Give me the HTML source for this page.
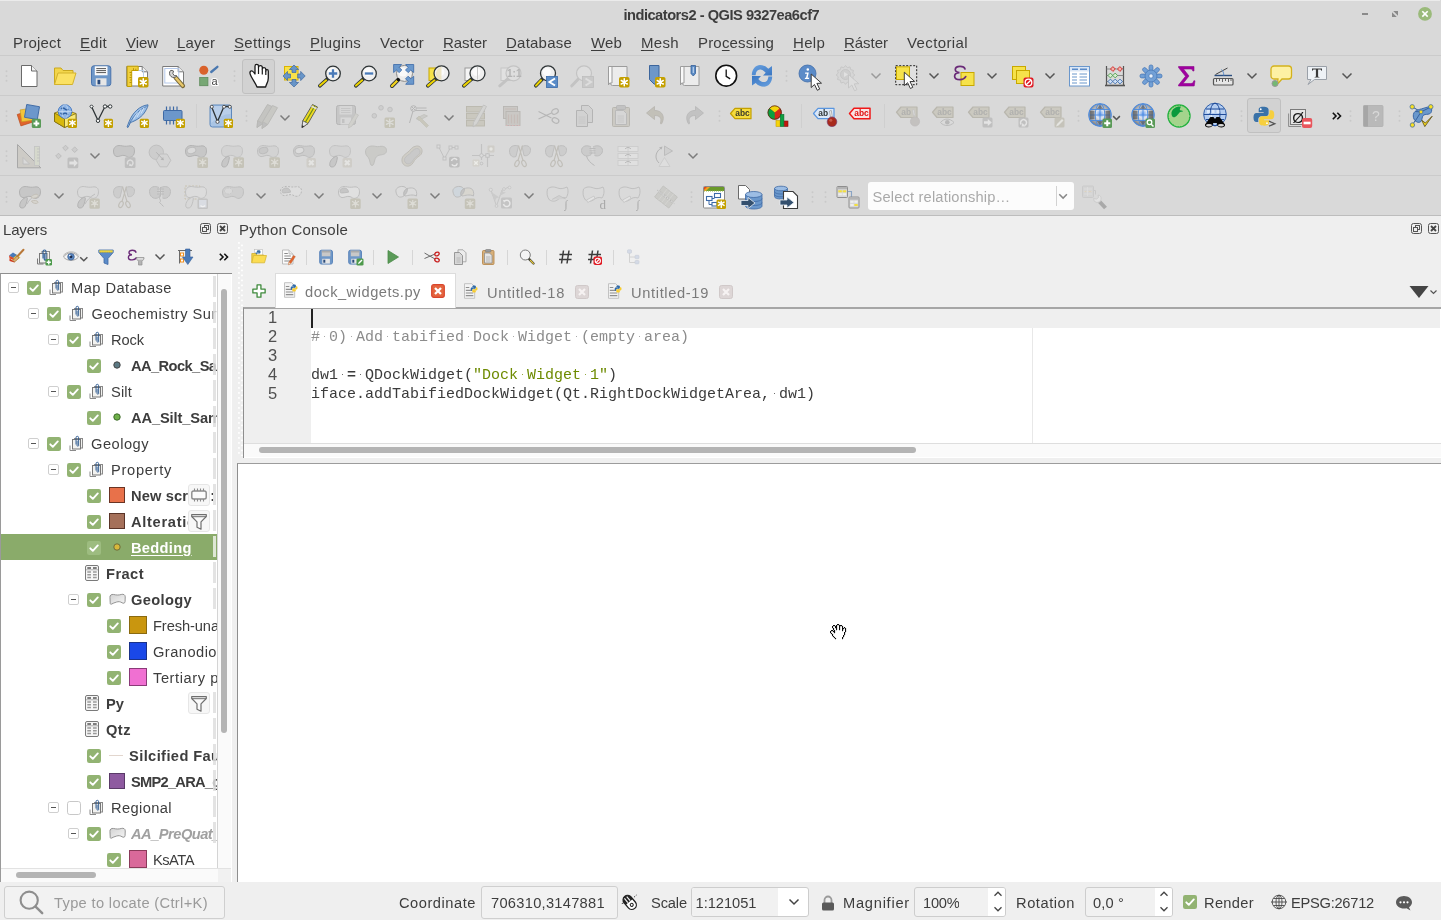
<!DOCTYPE html>
<html><head><meta charset="utf-8"><title>indicators2 - QGIS</title>
<style>
html,body{margin:0;padding:0;}
body{width:1441px;height:920px;overflow:hidden;background:#efefef;font-family:"Liberation Sans",sans-serif;position:relative;}
.t{position:absolute;white-space:nowrap;overflow:hidden;}
#root{position:absolute;left:0;top:0;width:1441px;height:920px;will-change:transform;}
.b{position:absolute;box-sizing:border-box;}
.i{position:absolute;overflow:visible;}
.ws{display:inline-block;width:9px;height:1.400px;vertical-align:middle;position:relative;top:0px;background:radial-gradient(circle at 4.500px .700px,currentColor .700px,transparent .900px);opacity:.75}
u{text-decoration:underline;text-underline-offset:2px;text-decoration-thickness:1px;}
</style></head><body><div id="root">
<div class="b" style="left:0px;top:0px;width:1441px;height:216px;background:#d9d9d9;"></div>
<div class="b" style="left:0px;top:215px;width:1441px;height:1px;background:#bdbdbd;"></div>
<div class="b" style="left:0px;top:55px;width:1441px;height:1px;background:#cbcbcb;"></div>
<div class="b" style="left:0px;top:95px;width:1441px;height:1px;background:#cbcbcb;"></div>
<div class="b" style="left:0px;top:135px;width:1441px;height:1px;background:#cbcbcb;"></div>
<div class="b" style="left:0px;top:175px;width:1441px;height:1px;background:#cbcbcb;"></div>
<div class="t " style="left:623.4px;top:4.8px;height:20px;line-height:20px;font-size:14.67px;color:#3d3d3d;letter-spacing:-0.495px;font-weight:700;">indicators2 - QGIS 9327ea6cf7</div>
<div class="b" style="left:0px;top:0px;width:1440px;height:1px;background:#ebebeb;"></div>
<div class="b" style="left:1362px;top:12.8px;width:6.2px;height:2.1px;background:#8a8a8a;"></div>
<svg class="i" style="left:1392px;top:11px" width="6" height="6" viewBox="0 0 6 6"><path d="M1.200 0h4.800v4.800zM0 1.200l4.800 4.800h-4.800z" fill="#8a8a8a"/></svg>
<svg class="i" style="left:1418px;top:7px" width="14" height="14" viewBox="0 0 14 14"><circle cx="7" cy="6.900" r="6.900" fill="#9aba7a"/><path d="M4.300 4.200l5.400 5.400M9.700 4.200l-5.400 5.400" stroke="#fff" stroke-width="1.600"/></svg>
<div class="t " style="left:13px;top:32.5px;height:20px;line-height:20px;font-size:15px;color:#3d3d3d;letter-spacing:0.188px;">Pro<u>j</u>ect</div>
<div class="t " style="left:80px;top:32.5px;height:20px;line-height:20px;font-size:15px;color:#3d3d3d;letter-spacing:0.288px;"><u>E</u>dit</div>
<div class="t " style="left:126px;top:32.5px;height:20px;line-height:20px;font-size:15px;color:#3d3d3d;letter-spacing:-0.060px;"><u>V</u>iew</div>
<div class="t " style="left:177px;top:32.5px;height:20px;line-height:20px;font-size:15px;color:#3d3d3d;letter-spacing:0.096px;"><u>L</u>ayer</div>
<div class="t " style="left:234px;top:32.5px;height:20px;line-height:20px;font-size:15px;color:#3d3d3d;letter-spacing:0.350px;"><u>S</u>ettings</div>
<div class="t " style="left:310px;top:32.5px;height:20px;line-height:20px;font-size:15px;color:#3d3d3d;letter-spacing:0.258px;"><u>P</u>lugins</div>
<div class="t " style="left:380px;top:32.5px;height:20px;line-height:20px;font-size:15px;color:#3d3d3d;letter-spacing:0.246px;">Vect<u>o</u>r</div>
<div class="t " style="left:443px;top:32.5px;height:20px;line-height:20px;font-size:15px;color:#3d3d3d;letter-spacing:-0.030px;"><u>R</u>aster</div>
<div class="t " style="left:506px;top:32.5px;height:20px;line-height:20px;font-size:15px;color:#3d3d3d;letter-spacing:0.224px;"><u>D</u>atabase</div>
<div class="t " style="left:591px;top:32.5px;height:20px;line-height:20px;font-size:15px;color:#3d3d3d;letter-spacing:0.143px;"><u>W</u>eb</div>
<div class="t " style="left:641px;top:32.5px;height:20px;line-height:20px;font-size:15px;color:#3d3d3d;letter-spacing:0.330px;"><u>M</u>esh</div>
<div class="t " style="left:698px;top:32.5px;height:20px;line-height:20px;font-size:15px;color:#3d3d3d;letter-spacing:0.180px;">Pro<u>c</u>essing</div>
<div class="t " style="left:793px;top:32.5px;height:20px;line-height:20px;font-size:15px;color:#3d3d3d;letter-spacing:0.288px;"><u>H</u>elp</div>
<div class="t " style="left:844px;top:32.5px;height:20px;line-height:20px;font-size:15px;color:#3d3d3d;letter-spacing:-0.030px;"><u>R</u>áster</div>
<div class="t " style="left:907px;top:32.5px;height:20px;line-height:20px;font-size:15px;color:#3d3d3d;letter-spacing:0.385px;">Vect<u>o</u>rial</div>
<div class="t " style="left:3px;top:219.5px;height:20px;line-height:20px;font-size:15px;color:#3d3d3d;letter-spacing:-0.170px;">Layers</div>
<div class="t " style="left:239px;top:219.5px;height:20px;line-height:20px;font-size:15px;color:#3d3d3d;letter-spacing:0.222px;">Python Console</div>
<div class="b" style="left:0px;top:273px;width:232px;height:610px;background:#fff;border-top:1px solid #8f8f8f;border-left:1px solid #9a9a9a;"></div>
<div class="b" style="left:217px;top:274px;width:1px;height:595px;background:#d4d4d4;"></div>
<div class="b" style="left:218px;top:274px;width:13px;height:595px;background:#fafafa;"></div>
<div class="b" style="left:221px;top:289px;width:6px;height:444px;background:#b4b4b4;border-radius:3px;"></div>
<div class="b" style="left:1px;top:868px;width:230px;height:14px;background:#fafafa;border-top:1px solid #e2e2e2;"></div>
<div class="b" style="left:16px;top:872px;width:80px;height:6px;background:#b4b4b4;border-radius:3px;"></div>
<div class="b" style="left:218px;top:869px;width:13px;height:13px;background:#f1f1f1;"></div>
<div class="b" style="left:1px;top:274px;width:216px;height:594px;overflow:hidden">
<div class="b" style="left:0px;top:260px;width:216px;height:26px;background:#8aab6a"></div>
<svg class="i" style="left:7px;top:8px" width="11" height="11" viewBox="0 0 11 11"><rect x="0.5" y="0.5" width="10" height="10" rx="1.500" fill="#fff" stroke="#cfcfcf"/><path d="M3 5.500h5" stroke="#555" stroke-width="1"/></svg>
<svg class="i" style="left:26px;top:7px" width="14" height="14" viewBox="0 0 14 14"><rect x="0" y="0" width="14" height="14" rx="2.200" fill="#92b372"/><path d="M3.300 7.300l2.500 2.500 5-5.400" stroke="#fff" stroke-width="1.900" fill="none" stroke-linecap="round" stroke-linejoin="round"/></svg>
<svg class="i" style="left:47.7px;top:4px" width="16" height="18" viewBox="0 0 16 18"><path d="M1 11.500v5h6" stroke="#8a8a8a" fill="none" stroke-width="1"/><rect x="5.500" y="4.500" width="8" height="9.500" fill="#f2f2f0" stroke="#8a8a8a" stroke-width="1"/><rect x="3.500" y="5.500" width="8" height="9.500" fill="#f2f2f0" stroke="#777" stroke-width="1"/><path d="M7 10.500v-6.800a1.300 1.400 0 0 1 2.600 0v8a.8 .8 0 0 1-1.500 0v-5" stroke="#2a5890" fill="none" stroke-width=".9"/></svg>
<div class="t " style="left:70px;top:4px;height:20px;line-height:20px;font-size:14.67px;color:#3d3d3d;letter-spacing:0.466px;width:146px;">Map Database</div>
<svg class="i" style="left:27px;top:34px" width="11" height="11" viewBox="0 0 11 11"><rect x="0.5" y="0.5" width="10" height="10" rx="1.500" fill="#fff" stroke="#cfcfcf"/><path d="M3 5.500h5" stroke="#555" stroke-width="1"/></svg>
<svg class="i" style="left:46px;top:33px" width="14" height="14" viewBox="0 0 14 14"><rect x="0" y="0" width="14" height="14" rx="2.200" fill="#92b372"/><path d="M3.300 7.300l2.500 2.500 5-5.400" stroke="#fff" stroke-width="1.900" fill="none" stroke-linecap="round" stroke-linejoin="round"/></svg>
<svg class="i" style="left:67.7px;top:30px" width="16" height="18" viewBox="0 0 16 18"><path d="M1 11.500v5h6" stroke="#8a8a8a" fill="none" stroke-width="1"/><rect x="5.500" y="4.500" width="8" height="9.500" fill="#f2f2f0" stroke="#8a8a8a" stroke-width="1"/><rect x="3.500" y="5.500" width="8" height="9.500" fill="#f2f2f0" stroke="#777" stroke-width="1"/><path d="M7 10.500v-6.800a1.300 1.400 0 0 1 2.600 0v8a.8 .8 0 0 1-1.500 0v-5" stroke="#2a5890" fill="none" stroke-width=".9"/></svg>
<div class="t " style="left:90.5px;top:30px;height:20px;line-height:20px;font-size:14.67px;color:#3d3d3d;letter-spacing:0.506px;width:125.5px;">Geochemistry Surveys</div>
<svg class="i" style="left:47px;top:60px" width="11" height="11" viewBox="0 0 11 11"><rect x="0.5" y="0.5" width="10" height="10" rx="1.500" fill="#fff" stroke="#cfcfcf"/><path d="M3 5.500h5" stroke="#555" stroke-width="1"/></svg>
<svg class="i" style="left:66px;top:59px" width="14" height="14" viewBox="0 0 14 14"><rect x="0" y="0" width="14" height="14" rx="2.200" fill="#92b372"/><path d="M3.300 7.300l2.500 2.500 5-5.400" stroke="#fff" stroke-width="1.900" fill="none" stroke-linecap="round" stroke-linejoin="round"/></svg>
<svg class="i" style="left:87.7px;top:56px" width="16" height="18" viewBox="0 0 16 18"><path d="M1 11.500v5h6" stroke="#8a8a8a" fill="none" stroke-width="1"/><rect x="5.500" y="4.500" width="8" height="9.500" fill="#f2f2f0" stroke="#8a8a8a" stroke-width="1"/><rect x="3.500" y="5.500" width="8" height="9.500" fill="#f2f2f0" stroke="#777" stroke-width="1"/><path d="M7 10.500v-6.800a1.300 1.400 0 0 1 2.600 0v8a.8 .8 0 0 1-1.500 0v-5" stroke="#2a5890" fill="none" stroke-width=".9"/></svg>
<div class="t " style="left:110px;top:56px;height:20px;line-height:20px;font-size:14.67px;color:#3d3d3d;letter-spacing:-0.106px;width:106px;">Rock</div>
<svg class="i" style="left:86px;top:85px" width="14" height="14" viewBox="0 0 14 14"><rect x="0" y="0" width="14" height="14" rx="2.200" fill="#92b372"/><path d="M3.300 7.300l2.500 2.500 5-5.400" stroke="#fff" stroke-width="1.900" fill="none" stroke-linecap="round" stroke-linejoin="round"/></svg>
<svg class="i" style="left:111px;top:86px" width="10" height="10" viewBox="0 0 10 10"><circle cx="5" cy="5" r="3.2" fill="#5c7a84" stroke="#444" stroke-width="1"/></svg>
<div class="t " style="left:130px;top:82px;height:20px;line-height:20px;font-size:14.67px;color:#3d3d3d;letter-spacing:-0.582px;font-weight:700;width:86px;">AA_Rock_Samples</div>
<svg class="i" style="left:47px;top:112px" width="11" height="11" viewBox="0 0 11 11"><rect x="0.5" y="0.5" width="10" height="10" rx="1.500" fill="#fff" stroke="#cfcfcf"/><path d="M3 5.500h5" stroke="#555" stroke-width="1"/></svg>
<svg class="i" style="left:66px;top:111px" width="14" height="14" viewBox="0 0 14 14"><rect x="0" y="0" width="14" height="14" rx="2.200" fill="#92b372"/><path d="M3.300 7.300l2.500 2.500 5-5.400" stroke="#fff" stroke-width="1.900" fill="none" stroke-linecap="round" stroke-linejoin="round"/></svg>
<svg class="i" style="left:87.7px;top:108px" width="16" height="18" viewBox="0 0 16 18"><path d="M1 11.500v5h6" stroke="#8a8a8a" fill="none" stroke-width="1"/><rect x="5.500" y="4.500" width="8" height="9.500" fill="#f2f2f0" stroke="#8a8a8a" stroke-width="1"/><rect x="3.500" y="5.500" width="8" height="9.500" fill="#f2f2f0" stroke="#777" stroke-width="1"/><path d="M7 10.500v-6.800a1.300 1.400 0 0 1 2.600 0v8a.8 .8 0 0 1-1.500 0v-5" stroke="#2a5890" fill="none" stroke-width=".9"/></svg>
<div class="t " style="left:110px;top:108px;height:20px;line-height:20px;font-size:14.67px;color:#3d3d3d;letter-spacing:0.155px;width:106px;">Silt</div>
<svg class="i" style="left:86px;top:137px" width="14" height="14" viewBox="0 0 14 14"><rect x="0" y="0" width="14" height="14" rx="2.200" fill="#92b372"/><path d="M3.300 7.300l2.500 2.500 5-5.400" stroke="#fff" stroke-width="1.900" fill="none" stroke-linecap="round" stroke-linejoin="round"/></svg>
<svg class="i" style="left:111px;top:138px" width="10" height="10" viewBox="0 0 10 10"><circle cx="5" cy="5" r="3.2" fill="#6fb04a" stroke="#3d6a2a" stroke-width="1"/></svg>
<div class="t " style="left:130px;top:134px;height:20px;line-height:20px;font-size:14.67px;color:#3d3d3d;letter-spacing:-0.119px;font-weight:700;width:86px;">AA_Silt_Samples</div>
<svg class="i" style="left:27px;top:164px" width="11" height="11" viewBox="0 0 11 11"><rect x="0.5" y="0.5" width="10" height="10" rx="1.500" fill="#fff" stroke="#cfcfcf"/><path d="M3 5.500h5" stroke="#555" stroke-width="1"/></svg>
<svg class="i" style="left:46px;top:163px" width="14" height="14" viewBox="0 0 14 14"><rect x="0" y="0" width="14" height="14" rx="2.200" fill="#92b372"/><path d="M3.300 7.300l2.500 2.500 5-5.400" stroke="#fff" stroke-width="1.900" fill="none" stroke-linecap="round" stroke-linejoin="round"/></svg>
<svg class="i" style="left:67.7px;top:160px" width="16" height="18" viewBox="0 0 16 18"><path d="M1 11.500v5h6" stroke="#8a8a8a" fill="none" stroke-width="1"/><rect x="5.500" y="4.500" width="8" height="9.500" fill="#f2f2f0" stroke="#8a8a8a" stroke-width="1"/><rect x="3.500" y="5.500" width="8" height="9.500" fill="#f2f2f0" stroke="#777" stroke-width="1"/><path d="M7 10.500v-6.800a1.300 1.400 0 0 1 2.600 0v8a.8 .8 0 0 1-1.500 0v-5" stroke="#2a5890" fill="none" stroke-width=".9"/></svg>
<div class="t " style="left:90px;top:160px;height:20px;line-height:20px;font-size:14.67px;color:#3d3d3d;letter-spacing:0.480px;width:126px;">Geology</div>
<svg class="i" style="left:47px;top:190px" width="11" height="11" viewBox="0 0 11 11"><rect x="0.5" y="0.5" width="10" height="10" rx="1.500" fill="#fff" stroke="#cfcfcf"/><path d="M3 5.500h5" stroke="#555" stroke-width="1"/></svg>
<svg class="i" style="left:66px;top:189px" width="14" height="14" viewBox="0 0 14 14"><rect x="0" y="0" width="14" height="14" rx="2.200" fill="#92b372"/><path d="M3.300 7.300l2.500 2.500 5-5.400" stroke="#fff" stroke-width="1.900" fill="none" stroke-linecap="round" stroke-linejoin="round"/></svg>
<svg class="i" style="left:87.7px;top:186px" width="16" height="18" viewBox="0 0 16 18"><path d="M1 11.500v5h6" stroke="#8a8a8a" fill="none" stroke-width="1"/><rect x="5.500" y="4.500" width="8" height="9.500" fill="#f2f2f0" stroke="#8a8a8a" stroke-width="1"/><rect x="3.500" y="5.500" width="8" height="9.500" fill="#f2f2f0" stroke="#777" stroke-width="1"/><path d="M7 10.500v-6.800a1.300 1.400 0 0 1 2.600 0v8a.8 .8 0 0 1-1.500 0v-5" stroke="#2a5890" fill="none" stroke-width=".9"/></svg>
<div class="t " style="left:110px;top:186px;height:20px;line-height:20px;font-size:14.67px;color:#3d3d3d;letter-spacing:0.695px;width:106px;">Property</div>
<svg class="i" style="left:86px;top:215px" width="14" height="14" viewBox="0 0 14 14"><rect x="0" y="0" width="14" height="14" rx="2.200" fill="#92b372"/><path d="M3.300 7.300l2.500 2.500 5-5.400" stroke="#fff" stroke-width="1.900" fill="none" stroke-linecap="round" stroke-linejoin="round"/></svg>
<div class="b" style="left:108px;top:213px;width:16px;height:16px;background:#e8714a;border:1px solid #6a3424"></div>
<div class="t " style="left:130px;top:212px;height:20px;line-height:20px;font-size:14.67px;color:#3d3d3d;letter-spacing:0.105px;font-weight:700;width:56.5px;">New scratch layer</div>
<div class="t " style="left:209.3px;top:212px;height:20px;line-height:20px;font-size:14.67px;color:#3d3d3d;font-weight:700;width:2.700px;">:h</div>
<svg class="i" style="left:86px;top:241px" width="14" height="14" viewBox="0 0 14 14"><rect x="0" y="0" width="14" height="14" rx="2.200" fill="#92b372"/><path d="M3.300 7.300l2.500 2.500 5-5.400" stroke="#fff" stroke-width="1.900" fill="none" stroke-linecap="round" stroke-linejoin="round"/></svg>
<div class="b" style="left:108px;top:239px;width:16px;height:16px;background:#a5705a;border:1px solid #5a3428"></div>
<div class="t " style="left:130px;top:238px;height:20px;line-height:20px;font-size:14.67px;color:#3d3d3d;letter-spacing:0.682px;font-weight:700;width:56.5px;">Alteration</div>
<svg class="i" style="left:86px;top:267px" width="14" height="14" viewBox="0 0 14 14"><rect x="0" y="0" width="14" height="14" rx="2.200" fill="#9dbc80"/><path d="M3.300 7.300l2.500 2.500 5-5.400" stroke="#fff" stroke-width="1.900" fill="none" stroke-linecap="round" stroke-linejoin="round"/></svg>
<svg class="i" style="left:111px;top:268px" width="10" height="10" viewBox="0 0 10 10"><circle cx="5" cy="5" r="3.2" fill="#d8b83a" stroke="#6a6a3a" stroke-width="1"/></svg>
<div class="t " style="left:130px;top:264px;height:20px;line-height:20px;font-size:14.67px;color:#fff;letter-spacing:0.290px;font-weight:700;text-decoration:underline;text-underline-offset:2px;width:86px;">Bedding</div>
<svg class="i" style="left:83px;top:290.8px" width="16" height="16" viewBox="0 0 16 16"><rect x="1.500" y="0.500" width="13" height="15" rx="1.500" fill="#f6f6f6" stroke="#7a7a7a"/><path d="M3.300 3h3.700M9 3h3.700" stroke="#555" stroke-width="1.300"/><path d="M2 4.800h12" stroke="#9a9a9a" stroke-width=".8"/><path d="M3.300 7h3.700M9 7h3.700M3.300 9.700h3.700M9 9.700h3.700M3.300 12.400h3.700M9 12.400h3.700" stroke="#9a9a9a" stroke-width="1.500"/></svg>
<div class="t " style="left:105px;top:290px;height:20px;line-height:20px;font-size:14.67px;color:#3d3d3d;letter-spacing:0.426px;font-weight:700;width:111px;">Fract</div>
<svg class="i" style="left:67px;top:320px" width="11" height="11" viewBox="0 0 11 11"><rect x="0.5" y="0.5" width="10" height="10" rx="1.500" fill="#fff" stroke="#cfcfcf"/><path d="M3 5.500h5" stroke="#555" stroke-width="1"/></svg>
<svg class="i" style="left:86px;top:319px" width="14" height="14" viewBox="0 0 14 14"><rect x="0" y="0" width="14" height="14" rx="2.200" fill="#92b372"/><path d="M3.300 7.300l2.500 2.500 5-5.400" stroke="#fff" stroke-width="1.900" fill="none" stroke-linecap="round" stroke-linejoin="round"/></svg>
<svg class="i" style="left:107.5px;top:318.6px" width="17" height="12.200" viewBox="0 0 18 14" preserveAspectRatio="none"><defs><linearGradient id="pg1" x1="0" y1="0" x2="1" y2="1"><stop offset="0" stop-color="#d2d2d2"/><stop offset="1" stop-color="#f6f6f6"/></linearGradient></defs><path d="M1 5c-.3-2.300 1.500-3.800 3.800-3.300 2.800.6 5.200 1 8.200 0 2.300-.8 4.300.5 4.200 2.800l-.2 5.500c-.1 1.800-1.800 2.200-3.200 1.200-1.800-1.300-3.800-1.600-5.800-.8-2 .8-3.800 1.200-5.300 2.300-.8.600-1.300.2-1.400-.9z" fill="url(#pg1)" stroke="#8a8a8a" stroke-width="1"/></svg>
<div class="t " style="left:130px;top:316px;height:20px;line-height:20px;font-size:14.67px;color:#3d3d3d;letter-spacing:0.331px;font-weight:700;width:86px;">Geology</div>
<svg class="i" style="left:106px;top:345px" width="14" height="14" viewBox="0 0 14 14"><rect x="0" y="0" width="14" height="14" rx="2.200" fill="#92b372"/><path d="M3.300 7.300l2.500 2.500 5-5.400" stroke="#fff" stroke-width="1.900" fill="none" stroke-linecap="round" stroke-linejoin="round"/></svg>
<div class="b" style="left:128px;top:342px;width:18px;height:18px;background:#c9960f;border:1px solid #8a6a10"></div>
<div class="t " style="left:152px;top:342px;height:20px;line-height:20px;font-size:14.67px;color:#3d3d3d;letter-spacing:-0.095px;width:64px;">Fresh-unaltered</div>
<svg class="i" style="left:106px;top:371px" width="14" height="14" viewBox="0 0 14 14"><rect x="0" y="0" width="14" height="14" rx="2.200" fill="#92b372"/><path d="M3.300 7.300l2.500 2.500 5-5.400" stroke="#fff" stroke-width="1.900" fill="none" stroke-linecap="round" stroke-linejoin="round"/></svg>
<div class="b" style="left:128px;top:368px;width:18px;height:18px;background:#1a48e8;border:1px solid #1a328a"></div>
<div class="t " style="left:152px;top:368px;height:20px;line-height:20px;font-size:14.67px;color:#3d3d3d;letter-spacing:0.457px;width:64px;">Granodiorite</div>
<svg class="i" style="left:106px;top:397px" width="14" height="14" viewBox="0 0 14 14"><rect x="0" y="0" width="14" height="14" rx="2.200" fill="#92b372"/><path d="M3.300 7.300l2.500 2.500 5-5.400" stroke="#fff" stroke-width="1.900" fill="none" stroke-linecap="round" stroke-linejoin="round"/></svg>
<div class="b" style="left:128px;top:394px;width:18px;height:18px;background:#f070d2;border:1px solid #8a3a78"></div>
<div class="t " style="left:152px;top:394px;height:20px;line-height:20px;font-size:14.67px;color:#3d3d3d;letter-spacing:0.567px;width:64px;">Tertiary porphyry</div>
<svg class="i" style="left:83px;top:420.8px" width="16" height="16" viewBox="0 0 16 16"><rect x="1.500" y="0.500" width="13" height="15" rx="1.500" fill="#f6f6f6" stroke="#7a7a7a"/><path d="M3.300 3h3.700M9 3h3.700" stroke="#555" stroke-width="1.300"/><path d="M2 4.800h12" stroke="#9a9a9a" stroke-width=".8"/><path d="M3.300 7h3.700M9 7h3.700M3.300 9.700h3.700M9 9.700h3.700M3.300 12.400h3.700M9 12.400h3.700" stroke="#9a9a9a" stroke-width="1.500"/></svg>
<div class="t " style="left:105px;top:420px;height:20px;line-height:20px;font-size:14.67px;color:#3d3d3d;letter-spacing:0.028px;font-weight:700;width:81.5px;">Py</div>
<svg class="i" style="left:83px;top:446.8px" width="16" height="16" viewBox="0 0 16 16"><rect x="1.500" y="0.500" width="13" height="15" rx="1.500" fill="#f6f6f6" stroke="#7a7a7a"/><path d="M3.300 3h3.700M9 3h3.700" stroke="#555" stroke-width="1.300"/><path d="M2 4.800h12" stroke="#9a9a9a" stroke-width=".8"/><path d="M3.300 7h3.700M9 7h3.700M3.300 9.700h3.700M9 9.700h3.700M3.300 12.400h3.700M9 12.400h3.700" stroke="#9a9a9a" stroke-width="1.500"/></svg>
<div class="t " style="left:105px;top:446px;height:20px;line-height:20px;font-size:14.67px;color:#3d3d3d;letter-spacing:0.456px;font-weight:700;width:111px;">Qtz</div>
<svg class="i" style="left:86px;top:475px" width="14" height="14" viewBox="0 0 14 14"><rect x="0" y="0" width="14" height="14" rx="2.200" fill="#92b372"/><path d="M3.300 7.300l2.500 2.500 5-5.400" stroke="#fff" stroke-width="1.900" fill="none" stroke-linecap="round" stroke-linejoin="round"/></svg>
<div class="b" style="left:108px;top:480.5px;width:14px;height:1.200px;background:#e2d6ce"></div>
<div class="t " style="left:128px;top:472px;height:20px;line-height:20px;font-size:14.67px;color:#3d3d3d;letter-spacing:0.392px;font-weight:700;width:88px;">Silcified Faults</div>
<svg class="i" style="left:86px;top:501px" width="14" height="14" viewBox="0 0 14 14"><rect x="0" y="0" width="14" height="14" rx="2.200" fill="#92b372"/><path d="M3.300 7.300l2.500 2.500 5-5.400" stroke="#fff" stroke-width="1.900" fill="none" stroke-linecap="round" stroke-linejoin="round"/></svg>
<div class="b" style="left:108px;top:499px;width:16px;height:16px;background:#8e5aa0;border:1px solid #5a3a68"></div>
<div class="t " style="left:130px;top:498px;height:20px;line-height:20px;font-size:14.67px;color:#3d3d3d;letter-spacing:-0.750px;font-weight:700;width:86px;">SMP2_ARA_geol</div>
<svg class="i" style="left:47px;top:528px" width="11" height="11" viewBox="0 0 11 11"><rect x="0.5" y="0.5" width="10" height="10" rx="1.500" fill="#fff" stroke="#cfcfcf"/><path d="M3 5.500h5" stroke="#555" stroke-width="1"/></svg>
<svg class="i" style="left:66px;top:527px" width="14" height="14" viewBox="0 0 14 14"><rect x="0.5" y="0.5" width="13" height="13" rx="2.200" fill="#fff" stroke="#c8c8c8"/></svg>
<svg class="i" style="left:87.7px;top:524px" width="16" height="18" viewBox="0 0 16 18"><path d="M1 11.500v5h6" stroke="#8a8a8a" fill="none" stroke-width="1"/><rect x="5.500" y="4.500" width="8" height="9.500" fill="#f2f2f0" stroke="#8a8a8a" stroke-width="1"/><rect x="3.500" y="5.500" width="8" height="9.500" fill="#f2f2f0" stroke="#777" stroke-width="1"/><path d="M7 10.500v-6.800a1.300 1.400 0 0 1 2.600 0v8a.8 .8 0 0 1-1.500 0v-5" stroke="#2a5890" fill="none" stroke-width=".9"/></svg>
<div class="t " style="left:110px;top:524px;height:20px;line-height:20px;font-size:14.67px;color:#3d3d3d;letter-spacing:0.387px;width:106px;">Regional</div>
<svg class="i" style="left:67px;top:554px" width="11" height="11" viewBox="0 0 11 11"><rect x="0.5" y="0.5" width="10" height="10" rx="1.500" fill="#fff" stroke="#cfcfcf"/><path d="M3 5.500h5" stroke="#555" stroke-width="1"/></svg>
<svg class="i" style="left:86px;top:553px" width="14" height="14" viewBox="0 0 14 14"><rect x="0" y="0" width="14" height="14" rx="2.200" fill="#92b372"/><path d="M3.300 7.300l2.500 2.500 5-5.400" stroke="#fff" stroke-width="1.900" fill="none" stroke-linecap="round" stroke-linejoin="round"/></svg>
<svg class="i" style="left:107.5px;top:552.6px" width="17" height="12.200" viewBox="0 0 18 14" preserveAspectRatio="none"><defs><linearGradient id="pg2" x1="0" y1="0" x2="1" y2="1"><stop offset="0" stop-color="#d2d2d2"/><stop offset="1" stop-color="#f6f6f6"/></linearGradient></defs><path d="M1 5c-.3-2.300 1.500-3.800 3.800-3.300 2.800.6 5.200 1 8.200 0 2.300-.8 4.300.5 4.200 2.800l-.2 5.500c-.1 1.800-1.800 2.200-3.200 1.200-1.800-1.300-3.800-1.600-5.800-.8-2 .8-3.800 1.200-5.300 2.300-.8.600-1.300.2-1.400-.9z" fill="url(#pg2)" stroke="#8a8a8a" stroke-width="1"/></svg>
<div class="t " style="left:130px;top:550px;height:20px;line-height:20px;font-size:14.67px;color:#a0a0a0;letter-spacing:-0.511px;font-weight:700;font-style:italic;width:86px;">AA_PreQuat_geol</div>
<svg class="i" style="left:106px;top:579px" width="14" height="14" viewBox="0 0 14 14"><rect x="0" y="0" width="14" height="14" rx="2.200" fill="#92b372"/><path d="M3.300 7.300l2.500 2.500 5-5.400" stroke="#fff" stroke-width="1.900" fill="none" stroke-linecap="round" stroke-linejoin="round"/></svg>
<div class="b" style="left:128px;top:576px;width:18px;height:18px;background:#d9699a;border:1px solid #8a3a5a"></div>
<div class="t " style="left:152px;top:576px;height:20px;line-height:20px;font-size:14.67px;color:#3d3d3d;letter-spacing:-0.495px;width:64px;">KsATA</div>
<div class="b" style="left:212.2px;top:1.8px;width:2.700px;height:21.700px;background:rgba(222,222,222,.85)"></div>
<div class="b" style="left:212.2px;top:27.8px;width:2.700px;height:21.700px;background:rgba(222,222,222,.85)"></div>
<div class="b" style="left:212.2px;top:53.8px;width:2.700px;height:21.700px;background:rgba(222,222,222,.85)"></div>
<div class="b" style="left:212.2px;top:79.8px;width:2.700px;height:21.700px;background:rgba(222,222,222,.85)"></div>
<div class="b" style="left:212.2px;top:105.8px;width:2.700px;height:21.700px;background:rgba(222,222,222,.85)"></div>
<div class="b" style="left:212.2px;top:131.8px;width:2.700px;height:21.700px;background:rgba(222,222,222,.85)"></div>
<div class="b" style="left:212.2px;top:157.8px;width:2.700px;height:21.700px;background:rgba(222,222,222,.85)"></div>
<div class="b" style="left:212.2px;top:183.8px;width:2.700px;height:21.700px;background:rgba(222,222,222,.85)"></div>
<div class="b" style="left:212.2px;top:209.8px;width:2.700px;height:21.700px;background:rgba(222,222,222,.85)"></div>
<div class="b" style="left:212.2px;top:235.8px;width:2.700px;height:21.700px;background:rgba(222,222,222,.85)"></div>
<div class="b" style="left:212.2px;top:261.8px;width:2.700px;height:21.700px;background:rgba(240,244,236,.82)"></div>
<div class="b" style="left:212.2px;top:287.8px;width:2.700px;height:21.700px;background:rgba(222,222,222,.85)"></div>
<div class="b" style="left:212.2px;top:313.8px;width:2.700px;height:21.700px;background:rgba(222,222,222,.85)"></div>
<div class="b" style="left:212.2px;top:417.8px;width:2.700px;height:21.700px;background:rgba(222,222,222,.85)"></div>
<div class="b" style="left:212.2px;top:443.8px;width:2.700px;height:21.700px;background:rgba(222,222,222,.85)"></div>
<div class="b" style="left:212.2px;top:469.8px;width:2.700px;height:21.700px;background:rgba(222,222,222,.85)"></div>
<div class="b" style="left:212.2px;top:495.8px;width:2.700px;height:21.700px;background:rgba(222,222,222,.85)"></div>
<div class="b" style="left:212.2px;top:521.8px;width:2.700px;height:21.700px;background:rgba(222,222,222,.85)"></div>
<div class="b" style="left:212.2px;top:547.8px;width:2.700px;height:21.700px;background:rgba(222,222,222,.85)"></div>
<div class="b" style="left:187.3px;top:210.4px;width:22px;height:22px;background:#f7f7f7;border:1px solid #e6e6e6;border-radius:3px"></div>
<svg class="i" style="left:189.3px;top:214.4px" width="18" height="14" viewBox="0 0 18 14"><rect x="1.800" y="3" width="14.400" height="8" rx="1.800" fill="#fbfbfb" stroke="#8a8a8a" stroke-width="1.400"/><path d="M4.500 0.500v2.500M7.500 0.500v2.500M10.500 0.500v2.500M13.500 0.500v2.500M4.500 11v2.500M7.500 11v2.500M10.500 11v2.500M13.500 11v2.500" stroke="#8a8a8a" stroke-width="1.100"/></svg>
<div class="b" style="left:187.3px;top:236.4px;width:22px;height:22px;background:#f7f7f7;border:1px solid #e6e6e6;border-radius:3px"></div>
<svg class="i" style="left:190.3px;top:239.9px" width="16" height="16" viewBox="0 0 16 16"><path d="M0.700 0.700h14.600v1.800l-5.300 5.300v7.400l-4-2v-5.400l-5.300-5.300z" fill="#fafafa" stroke="#6e6e6e" stroke-width="1.200" stroke-linejoin="round"/><path d="M1 2.700h14" stroke="#6e6e6e" stroke-width="1"/></svg>
<div class="b" style="left:187.3px;top:418.4px;width:22px;height:22px;background:#f7f7f7;border:1px solid #e6e6e6;border-radius:3px"></div>
<svg class="i" style="left:190.3px;top:421.9px" width="16" height="16" viewBox="0 0 16 16"><path d="M0.700 0.700h14.600v1.800l-5.300 5.300v7.400l-4-2v-5.400l-5.300-5.300z" fill="#fafafa" stroke="#6e6e6e" stroke-width="1.200" stroke-linejoin="round"/><path d="M1 2.700h14" stroke="#6e6e6e" stroke-width="1"/></svg>
</div>
<svg class="i" style="left:200px;top:223px" width="11" height="11" viewBox="0 0 11 11"><rect x="0.5" y="0.5" width="10" height="10" rx="2" fill="none" stroke="#555"/><rect x="4.500" y="2.500" width="4" height="4" fill="none" stroke="#555" stroke-width="1"/><rect x="2.500" y="4.500" width="4" height="4" fill="#efefef" stroke="#555" stroke-width="1"/></svg>
<svg class="i" style="left:217px;top:223px" width="11" height="11" viewBox="0 0 11 11"><rect x="0.5" y="0.5" width="10" height="10" rx="2" fill="none" stroke="#555"/><path d="M3 3l5 5M8 3l-5 5" stroke="#444" stroke-width="1.800"/></svg>
<svg class="i" style="left:8px;top:248.5px;" width="16" height="16" viewBox="0 0 16 16"><path d="M2 9l5.500-4 5 3.500-5.500 4z" fill="#e8c848"/><path d="M1 6.500l4-3 4 2.500-4 3z" fill="#4a7ab8"/><path d="M1.500 9.500l4 2.500 2-1.500-1 3-5-1.500z" fill="#d0381c"/><path d="M1 6.500l4.500 2.500.5 2-4.500-1.500z" fill="#e04828"/><path d="M15.500 .8l-6.500 7" stroke="#b87838" stroke-width="2" stroke-linecap="round"/><path d="M5 11.500l4-4.500 2 2-4.500 4z" fill="#d8b078" stroke="#a87838" stroke-width=".7"/></svg>
<svg class="i" style="left:36px;top:248.5px;" width="16" height="16" viewBox="0 0 16 16"><path d="M1.500 9.500v5.500h6" stroke="#7a7a7a" fill="none" stroke-width="1"/><rect x="6" y="2.500" width="7.500" height="9.500" fill="#f0f0ee" stroke="#8a8a8a" stroke-width="1"/><rect x="3.500" y="4.500" width="7.500" height="9.500" fill="#f0f0ee" stroke="#777" stroke-width="1"/><path d="M7 9.500v-7a1.500 1.500 0 0 1 3 0v8a.9 .9 0 0 1-1.700 0v-5.500" stroke="#2f5f9a" fill="none" stroke-width="1.100"/><rect x="9.500" y="10" width="6.500" height="6.500" rx="1.200" fill="#4e9a4c"/><path d="M12.750 11.200v4.200M10.650 13.300h4.200" stroke="#fff" stroke-width="1.400"/></svg>
<svg class="i" style="left:63px;top:248.5px;" width="16" height="16" viewBox="0 0 16 16"><path d="M.5 8c3.500-5.500 11.500-5.500 15 0-3.500 4.500-11.500 4.500-15 0z" fill="#f4f4f4" stroke="#9a9a9a" stroke-width=".9"/><path d="M.3 6.500c4-5 12-5 15.500 0" stroke="#b0b0b0" stroke-width=".8" fill="none"/><circle cx="8" cy="7.800" r="3.300" fill="#5a88c4" stroke="#3a5a8a" stroke-width=".7"/><circle cx="8" cy="7.800" r="1.400" fill="#1a2a4a"/><circle cx="6.800" cy="6.600" r=".8" fill="#fff"/></svg>
<svg class="i" style="left:98px;top:248.5px;" width="16" height="16" viewBox="0 0 16 16"><path d="M.8 1h14.400v2.500l-5.200 6v6l-4-1.500v-4.500l-5.200-6z" fill="#5b8bc8" stroke="#3f6aa5" stroke-width=".8" stroke-linejoin="round"/><rect x="1.300" y="1.300" width="13.400" height="2" fill="#f0d840"/><path d="M2 3.300h12" stroke="#c4a000" stroke-width=".6" stroke-dasharray="1 .8"/></svg>
<svg class="i" style="left:128px;top:248.5px;" width="16" height="16" viewBox="0 0 16 16"><path d="M8 3.200c-.4-1.300-1.800-2-3.600-2-2.200 0-3.400 1.100-3.400 2.400 0 1.400 1.200 2.100 3 2.200-2.200.1-3.600 1.100-3.600 2.600 0 1.600 1.600 2.500 3.900 2.500 1.800 0 3.300-.7 4.100-2.200" fill="none" stroke="#6a2a78" stroke-width="1.400" stroke-linecap="round"/><path d="M8.500 8.500h7.500v1.500l-2 2.300v3.700h-3.500v-3.700l-2-2.300z" fill="#b4b4b4" stroke="#909090" stroke-width=".7"/><rect x="9.300" y="9.200" width="5.900" height="1.400" fill="#e8e8e8"/></svg>
<svg class="i" style="left:176.5px;top:248.5px;" width="16" height="16" viewBox="0 0 16 16"><path d="M1 1.500h14M2.500 1.500v13" stroke="#6a6a6a" stroke-width="1"/><rect x="3.500" y="4" width="3" height="3" fill="#fff" stroke="#f09020" stroke-width="1"/><rect x="3.500" y="10" width="3" height="3" fill="#fff" stroke="#f09020" stroke-width="1"/><path d="M8.500 0h4.500v8h3l-5.200 7.500-5.300-7.500h3z" fill="#4a7ab8" stroke="#355f99" stroke-width=".6"/></svg>
<svg class="i" style="left:78.7px;top:255.8px" width="9.6" height="6.4" viewBox="0 0 12 8"><path d="M1.500 1.500l4.500 4.500 4.500-4.500" stroke="#555" stroke-width="1.875" fill="none"/></svg>
<svg class="i" style="left:153.5px;top:253px" width="12" height="8" viewBox="0 0 12 8"><path d="M1.500 1.500l4.500 4.500 4.500-4.500" stroke="#555" stroke-width="1.5" fill="none"/></svg>
<svg class="i" style="left:218.8px;top:253.3px" width="10" height="8" viewBox="0 0 10 8"><path d="M.8 .8l3.200 3.200-3.200 3.200M5.300 .8l3.200 3.200-3.200 3.200" stroke="#111" stroke-width="1.600" fill="none"/></svg>
<svg class="i" style="left:237.600px;top:242px" width="5" height="214" viewBox="0 0 5 214"><defs><pattern id="spl" width="6" height="5" patternUnits="userSpaceOnUse"><rect x="0" y="0" width="1.900" height="1.700" rx=".5" fill="#fff"/><rect x="3" y="2.500" width="1.900" height="1.700" rx=".5" fill="#fff"/></pattern></defs><rect width="5" height="214" fill="url(#spl)" opacity=".95"/></svg>
<svg class="i" style="left:1411px;top:223px" width="11" height="11" viewBox="0 0 11 11"><rect x="0.5" y="0.5" width="10" height="10" rx="2" fill="none" stroke="#555"/><rect x="4.500" y="2.500" width="4" height="4" fill="none" stroke="#555" stroke-width="1"/><rect x="2.500" y="4.500" width="4" height="4" fill="#efefef" stroke="#555" stroke-width="1"/></svg>
<svg class="i" style="left:1428px;top:223px" width="11" height="11" viewBox="0 0 11 11"><rect x="0.5" y="0.5" width="10" height="10" rx="2" fill="none" stroke="#555"/><path d="M3 3l5 5M8 3l-5 5" stroke="#444" stroke-width="1.800"/></svg>
<svg class="i" style="left:251px;top:249px;" width="16" height="16" viewBox="0 0 16 16"><rect x="3.500" y=".5" width="8" height="7" fill="#fff" stroke="#bbb" stroke-width=".6"/><path d="M7.500 1.200c-1.500 0-1.700.7-1.700 1.200v.8h1.800v.3h-2.600c-.7 0-1.100.5-1.100 1.700s.4 1.600 1.100 1.600h.6v-1c0-.7.500-1.200 1.200-1.200h1.700c.6 0 1-.4 1-1v-1.300c0-.7-.5-1.100-2-1.100z" fill="#3a72a8"/><path d="M.8 13.800v-9.300h3.700l1.300 1.500h7v2" fill="#f0cf48" stroke="#d0b030" stroke-width=".8"/><path d="M.8 13.800l1.700-7.300h13l-2 7.300z" fill="#fbdc52" stroke="#d8b832" stroke-width=".8" stroke-linejoin="round"/></svg>
<svg class="i" style="left:280px;top:249px;" width="16" height="16" viewBox="0 0 16 16"><path d="M2.500 1h6.500l4 4v10h-10.500z" fill="#fbfbfb" stroke="#b6b6b6" stroke-width=".9"/><path d="M9 1v4h4" fill="#ececec" stroke="#b6b6b6" stroke-width=".8"/><path d="M4.300 4.500h3.500M4.300 7h6.500M4.300 9.500h6.500M4.300 12h6.500" stroke="#8a8a8a" stroke-width="1.100"/><path d="M13.500 6.500l1.800 1.100-4.500 7-2.300 1.200.4-2.500z" fill="#e2642c" stroke="#b85a2c" stroke-width=".5"/><path d="M8.900 13.300l1.900 1.300-2.300 1.200z" fill="#e8d8b8"/></svg>
<svg class="i" style="left:318px;top:249px;" width="16" height="16" viewBox="0 0 16 16"><rect x="1.700" y="1.200" width="12.800" height="13.900" rx="1.800" fill="#6e97c8" stroke="#5580b8" stroke-width=".9"/><rect x="3.800" y="1.700" width="8.600" height="5.600" fill="#c8c8c8"/><rect x="3.800" y="1.700" width="8.600" height="1.800" fill="#aaa"/><rect x="4.300" y="9.800" width="7.600" height="4.800" fill="#e6e6e6"/><rect x="5.300" y="10.700" width="2" height="3" fill="#2a4a7a"/></svg>
<svg class="i" style="left:346.5px;top:249px;" width="16" height="16" viewBox="0 0 16 16"><rect x="1.700" y="1.200" width="12.800" height="13.900" rx="1.800" fill="#6e97c8" stroke="#5580b8" stroke-width=".9"/><rect x="3.800" y="1.700" width="8.600" height="5.600" fill="#c8c8c8"/><rect x="3.800" y="1.700" width="8.600" height="1.800" fill="#aaa"/><rect x="4.300" y="9.800" width="7.600" height="4.800" fill="#e6e6e6"/><rect x="5.300" y="10.700" width="2" height="3" fill="#2a4a7a"/><rect x="9.500" y="9.500" width="7" height="7" rx="1.300" fill="#4e9a4c"/><path d="M11 15l.5-1.500 3-3 1 1-3 3z" fill="#fff"/></svg>
<svg class="i" style="left:385px;top:249px;" width="16" height="16" viewBox="0 0 16 16"><path d="M3 1.500l10.500 6.500-10.500 6.500z" fill="#5a9a58" stroke="#4a8a48" stroke-width=".8" stroke-linejoin="round"/></svg>
<svg class="i" style="left:424px;top:249px;" width="16" height="16" viewBox="0 0 16 16"><path d="M.5 4l10.500 6M.5 9.500l10.500-4.500" stroke="#6a6a6a" stroke-width="1" fill="none"/><ellipse cx="13" cy="5" rx="2.300" ry="1.700" transform="rotate(-25 13 5)" fill="none" stroke="#c81e1e" stroke-width="1.300"/><ellipse cx="13" cy="11" rx="2.300" ry="1.700" transform="rotate(25 13 11)" fill="none" stroke="#c81e1e" stroke-width="1.300"/></svg>
<svg class="i" style="left:452px;top:249px;" width="16" height="16" viewBox="0 0 16 16"><path d="M6 .8h5l3 3v9h-8z" fill="#ececec" stroke="#a4a4a4" stroke-width=".9"/><path d="M2.500 3.500h5l3 3v9h-8z" fill="#d8d8d8" stroke="#8e8e8e" stroke-width=".9"/><path d="M4.500 9h4M4.500 11h4M4.500 13h4" stroke="#b0b0b0" stroke-width=".8"/></svg>
<svg class="i" style="left:480px;top:249px;" width="16" height="16" viewBox="0 0 16 16"><rect x="2.500" y="1.500" width="11.500" height="14" rx="1" fill="#d8b07a" stroke="#b88a50" stroke-width=".9"/><rect x="5.500" y=".5" width="5.500" height="2.500" rx=".8" fill="#9a9a9a" stroke="#7a7a7a" stroke-width=".6"/><path d="M4.500 4h5l2.500 2.500v7.500h-7.500z" fill="#e6e6e6" stroke="#8e8e8e" stroke-width=".8"/><path d="M6 8h4.500M6 10h4.500M6 12h4.500" stroke="#a8a8a8" stroke-width=".8"/></svg>
<svg class="i" style="left:519px;top:249px;" width="16" height="16" viewBox="0 0 16 16"><path d="M9.200 9.200l5.300 5.300" stroke="#4a4a3a" stroke-width="2.400" stroke-linecap="round"/><path d="M11.500 11.500l2.800 2.800" stroke="#e8c83c" stroke-width="1.200" stroke-linecap="round"/><circle cx="6.300" cy="6" r="5" fill="#f4f4f4" stroke="#7a7a7a" stroke-width="1"/></svg>
<svg class="i" style="left:558px;top:249px;" width="16" height="16" viewBox="0 0 16 16"><path d="M5.500 1.500l-2 13M11 1.500l-2 13M1.500 5.500h12.500M1 10.500h12.500" stroke="#3c3c3c" stroke-width="1.500" fill="none"/></svg>
<svg class="i" style="left:586.5px;top:249px;" width="16" height="16" viewBox="0 0 16 16"><path d="M5.500 1.500l-2 13M11 1.500l-2 13M1.500 5.500h12.500M1 10.500h12.500" stroke="#3c3c3c" stroke-width="1.500" fill="none"/><rect x="6.500" y="7.500" width="8.500" height="8.500" rx="1.800" fill="#e01b24"/><circle cx="10.800" cy="11.800" r="2.600" fill="none" stroke="#fff" stroke-width="1.100"/><path d="M9 13.600l3.600-3.600" stroke="#fff" stroke-width="1.100"/></svg>
<svg class="i" style="left:624.5px;top:249px;" width="16" height="16" viewBox="0 0 16 16"><path d="M4.500 3.500v10h6M4.500 8h6" stroke="#d2d2d2" stroke-width="1" fill="none"/><g fill="#d4dae6" stroke="#c8ccd6" stroke-width=".6"><rect x="2.500" y=".8" width="4" height="3.400" rx=".8"/><rect x="10" y="6.300" width="4" height="3.400" rx=".8"/><rect x="10" y="11.500" width="4" height="3.400" rx=".8"/></g></svg>
<div class="b" style="left:306px;top:249.5px;width:1px;height:15px;background:#d6d6d6;"></div>
<div class="b" style="left:373px;top:249.5px;width:1px;height:15px;background:#d6d6d6;"></div>
<div class="b" style="left:412px;top:249.5px;width:1px;height:15px;background:#d6d6d6;"></div>
<div class="b" style="left:507px;top:249.5px;width:1px;height:15px;background:#d6d6d6;"></div>
<div class="b" style="left:546px;top:249.5px;width:1px;height:15px;background:#d6d6d6;"></div>
<div class="b" style="left:613px;top:249.5px;width:1px;height:15px;background:#d6d6d6;"></div>
<div class="b" style="left:243px;top:307px;width:1200px;height:151px;background:#fff;border:1px solid #8e8e8e;border-top:2px solid #a6a6a6;border-bottom:none;"></div>
<div class="b" style="left:275px;top:273px;width:181px;height:35px;background:#fff;border:1px solid #dcdcdc;border-bottom:none;"></div>
<svg class="i" style="left:252px;top:284.3px;" width="14" height="14" viewBox="0 0 16 16"><path d="M5.800 1h4.400v4.800h4.800v4.400h-4.800v4.800h-4.400v-4.800h-4.800v-4.400h4.800z" fill="#fff" stroke="#3f8a3c" stroke-width="1.500" stroke-linejoin="round"/></svg>
<svg class="i" style="left:282px;top:282px;" width="16" height="16" viewBox="0 0 16 16"><path d="M2.500 .7h7.200l3 3v11.600h-10.200z" fill="#f3f3f3" stroke="#c2c2c2" stroke-width="1" stroke-linejoin="round"/><path d="M3.800 4.500h3.500M3.800 7.300h6.500M3.800 10h7.500M3.800 12.700h7.500" stroke="#8e8e8e" stroke-width="1.200"/><g transform="translate(8.700 2.400) scale(.47)"><path d="M7 0c-3 0-3.400 1.300-3.400 2.400v1.700h3.600v.6h-5c-1.300 0-2.200 1-2.200 3.300s.9 3.300 2.200 3.300h1.300v-2c0-1.300 1-2.300 2.300-2.300h3.300c1.100 0 2-.9 2-2v-2.600c0-1.300-1-2.400-4.100-2.400z" fill="#2f6aa8"/><path d="M7.500 15.300c3 0 3.400-1.300 3.400-2.400v-1.700h-3.600v-.6h5c1.300 0 2.200-1 2.200-3.300s-.9-3.300-2.200-3.300h-1.300v2c0 1.300-1 2.300-2.300 2.300h-3.300c-1.100 0-2 .9-2 2v2.600c0 1.300 1 2.400 4.100 2.400z" fill="#f9cd2e"/></g></svg>
<div class="t " style="left:305px;top:281.5px;height:20px;line-height:20px;font-size:14.67px;color:#7a7a7a;letter-spacing:0.503px;">dock_widgets.py</div>
<svg class="i" style="left:431px;top:284px" width="14" height="14" viewBox="0 0 14 14"><rect x="0.700" y="0.700" width="12.600" height="12.600" rx="2" fill="#e4653f" stroke="#d9452c" stroke-width="1.200"/><path d="M4 4l6 6M10 4l-6 6" stroke="#fff" stroke-width="2.300"/></svg>
<svg class="i" style="left:462px;top:283px;" width="16" height="16" viewBox="0 0 16 16"><path d="M2.500 .7h7.200l3 3v11.600h-10.200z" fill="#f3f3f3" stroke="#c2c2c2" stroke-width="1" stroke-linejoin="round"/><path d="M3.800 4.500h3.500M3.800 7.300h6.500M3.800 10h7.500M3.800 12.700h7.500" stroke="#8e8e8e" stroke-width="1.200"/><g transform="translate(8.700 2.400) scale(.47)"><path d="M7 0c-3 0-3.400 1.300-3.400 2.400v1.700h3.600v.6h-5c-1.300 0-2.200 1-2.200 3.300s.9 3.300 2.200 3.300h1.300v-2c0-1.300 1-2.300 2.300-2.300h3.300c1.100 0 2-.9 2-2v-2.600c0-1.300-1-2.400-4.100-2.400z" fill="#2f6aa8"/><path d="M7.500 15.300c3 0 3.400-1.300 3.400-2.400v-1.700h-3.600v-.6h5c1.300 0 2.200-1 2.200-3.300s-.9-3.300-2.200-3.300h-1.300v2c0 1.300-1 2.300-2.300 2.300h-3.300c-1.100 0-2 .9-2 2v2.600c0 1.300 1 2.400 4.100 2.400z" fill="#f9cd2e"/></g></svg>
<div class="t " style="left:487px;top:282.5px;height:20px;line-height:20px;font-size:14.67px;color:#7a7a7a;letter-spacing:0.642px;">Untitled-18</div>
<svg class="i" style="left:575px;top:285px" width="14" height="14" viewBox="0 0 14 14"><rect x="0.500" y="0.500" width="13" height="13" rx="2" fill="#ddd6d6" stroke="#d0c9c9"/><path d="M4 4l6 6M10 4l-6 6" stroke="#f6f2f2" stroke-width="2.200"/></svg>
<svg class="i" style="left:606px;top:283px;" width="16" height="16" viewBox="0 0 16 16"><path d="M2.500 .7h7.200l3 3v11.600h-10.200z" fill="#f3f3f3" stroke="#c2c2c2" stroke-width="1" stroke-linejoin="round"/><path d="M3.800 4.500h3.500M3.800 7.300h6.500M3.800 10h7.500M3.800 12.700h7.500" stroke="#8e8e8e" stroke-width="1.200"/><g transform="translate(8.700 2.400) scale(.47)"><path d="M7 0c-3 0-3.400 1.300-3.400 2.400v1.700h3.600v.6h-5c-1.300 0-2.200 1-2.200 3.300s.9 3.300 2.200 3.300h1.300v-2c0-1.300 1-2.300 2.300-2.300h3.300c1.100 0 2-.9 2-2v-2.600c0-1.300-1-2.400-4.100-2.400z" fill="#2f6aa8"/><path d="M7.500 15.300c3 0 3.400-1.300 3.400-2.400v-1.700h-3.600v-.6h5c1.300 0 2.200-1 2.200-3.300s-.9-3.300-2.200-3.300h-1.300v2c0 1.300-1 2.300-2.300 2.300h-3.300c-1.100 0-2 .9-2 2v2.600c0 1.300 1 2.400 4.100 2.400z" fill="#f9cd2e"/></g></svg>
<div class="t " style="left:631px;top:282.5px;height:20px;line-height:20px;font-size:14.67px;color:#7a7a7a;letter-spacing:0.642px;">Untitled-19</div>
<svg class="i" style="left:719px;top:285px" width="14" height="14" viewBox="0 0 14 14"><rect x="0.500" y="0.500" width="13" height="13" rx="2" fill="#ddd6d6" stroke="#d0c9c9"/><path d="M4 4l6 6M10 4l-6 6" stroke="#f6f2f2" stroke-width="2.200"/></svg>
<svg class="i" style="left:1409px;top:285px" width="30" height="14" viewBox="0 0 30 14"><path d="M0.500 1h19l-9.500 12z" fill="#444"/><path d="M21.500 5.500l3 3 3-3" stroke="#555" stroke-width="1.200" fill="none"/></svg>
<div class="b" style="left:244px;top:309px;width:67px;height:134px;background:#efefef;"></div>
<div class="b" style="left:311px;top:309px;width:1129px;height:19px;background:#efefef;"></div>
<div class="b" style="left:311.3px;top:309.2px;width:1.6px;height:18.5px;background:#222;"></div>
<div class="b" style="left:1032px;top:328px;width:1px;height:115px;background:#e8e8e8;"></div>
<div class="t " style="left:268px;top:307.2px;height:20px;line-height:20px;font-size:16.5px;color:#505050;font-family:"Liberation Mono",monospace;">1</div>
<div class="t " style="left:268px;top:326.2px;height:20px;line-height:20px;font-size:16.5px;color:#505050;font-family:"Liberation Mono",monospace;">2</div>
<div class="t " style="left:268px;top:345.2px;height:20px;line-height:20px;font-size:16.5px;color:#505050;font-family:"Liberation Mono",monospace;">3</div>
<div class="t " style="left:268px;top:364.2px;height:20px;line-height:20px;font-size:16.5px;color:#505050;font-family:"Liberation Mono",monospace;">4</div>
<div class="t " style="left:268px;top:383.2px;height:20px;line-height:20px;font-size:16.5px;color:#505050;font-family:"Liberation Mono",monospace;">5</div>
<div class="t" style="left:311px;top:327.5px;height:20px;line-height:20px;font-size:15px;font-family:'Liberation Mono',monospace;"><span style="color:#8c8c8c;">#<span class="ws"></span>0)<span class="ws"></span>Add<span class="ws"></span>tabified<span class="ws"></span>Dock<span class="ws"></span>Widget<span class="ws"></span>(empty<span class="ws"></span>area)</span></div>
<div class="t" style="left:311px;top:365.5px;height:20px;line-height:20px;font-size:15px;font-family:'Liberation Mono',monospace;"><span style="color:#3b3b3b;">dw1<span class="ws"></span></span><span style="color:#3b3b3b;font-weight:700;">=</span><span style="color:#3b3b3b;"><span class="ws"></span>QDockWidget(</span><span style="color:#6d8a00;">&quot;Dock<span class="ws"></span>Widget<span class="ws"></span>1&quot;</span><span style="color:#3b3b3b;">)</span></div>
<div class="t" style="left:311px;top:384.5px;height:20px;line-height:20px;font-size:15px;font-family:'Liberation Mono',monospace;"><span style="color:#3b3b3b;">iface.addTabifiedDockWidget(Qt.RightDockWidgetArea,<span class="ws"></span>dw1)</span></div>
<div class="b" style="left:244px;top:443px;width:1197px;height:14px;background:#fafafa;border-top:1px solid #dedede;"></div>
<div class="b" style="left:259px;top:447px;width:657px;height:6px;background:#b4b4b4;border-radius:3px;"></div>
<div class="b" style="left:237px;top:463px;width:1210px;height:424px;background:#fff;border:1px solid #8e8e8e;border-top:1px solid #9c9c9c;"></div>
<svg class="i" style="left:830px;top:622px;" width="18" height="18" viewBox="0 0 18 18"><rect x="7" y="2" width="1.150" height="1.150" rx=".3" fill="#000"/><rect x="8" y="2" width="1.150" height="1.150" rx=".3" fill="#000"/><rect x="3" y="3" width="1.150" height="1.150" rx=".3" fill="#000"/><rect x="4" y="3" width="1.150" height="1.150" rx=".3" fill="#000"/><rect x="6" y="3" width="1.150" height="1.150" rx=".3" fill="#000"/><rect x="9" y="3" width="1.150" height="1.150" rx=".3" fill="#000"/><rect x="10" y="3" width="1.150" height="1.150" rx=".3" fill="#000"/><rect x="11" y="3" width="1.150" height="1.150" rx=".3" fill="#000"/><rect x="2" y="4" width="1.150" height="1.150" rx=".3" fill="#000"/><rect x="5" y="4" width="1.150" height="1.150" rx=".3" fill="#000"/><rect x="6" y="4" width="1.150" height="1.150" rx=".3" fill="#000"/><rect x="9" y="4" width="1.150" height="1.150" rx=".3" fill="#000"/><rect x="12" y="4" width="1.150" height="1.150" rx=".3" fill="#000"/><rect x="2" y="5" width="1.150" height="1.150" rx=".3" fill="#000"/><rect x="5" y="5" width="1.150" height="1.150" rx=".3" fill="#000"/><rect x="6" y="5" width="1.150" height="1.150" rx=".3" fill="#000"/><rect x="9" y="5" width="1.150" height="1.150" rx=".3" fill="#000"/><rect x="12" y="5" width="1.150" height="1.150" rx=".3" fill="#000"/><rect x="14" y="5" width="1.150" height="1.150" rx=".3" fill="#000"/><rect x="3" y="6" width="1.150" height="1.150" rx=".3" fill="#000"/><rect x="6" y="6" width="1.150" height="1.150" rx=".3" fill="#000"/><rect x="9" y="6" width="1.150" height="1.150" rx=".3" fill="#000"/><rect x="12" y="6" width="1.150" height="1.150" rx=".3" fill="#000"/><rect x="13" y="6" width="1.150" height="1.150" rx=".3" fill="#000"/><rect x="15" y="6" width="1.150" height="1.150" rx=".3" fill="#000"/><rect x="3" y="7" width="1.150" height="1.150" rx=".3" fill="#000"/><rect x="6" y="7" width="1.150" height="1.150" rx=".3" fill="#000"/><rect x="9" y="7" width="1.150" height="1.150" rx=".3" fill="#000"/><rect x="12" y="7" width="1.150" height="1.150" rx=".3" fill="#000"/><rect x="15" y="7" width="1.150" height="1.150" rx=".3" fill="#000"/><rect x="1" y="8" width="1.150" height="1.150" rx=".3" fill="#000"/><rect x="2" y="8" width="1.150" height="1.150" rx=".3" fill="#000"/><rect x="4" y="8" width="1.150" height="1.150" rx=".3" fill="#000"/><rect x="12" y="8" width="1.150" height="1.150" rx=".3" fill="#000"/><rect x="15" y="8" width="1.150" height="1.150" rx=".3" fill="#000"/><rect x="0" y="9" width="1.150" height="1.150" rx=".3" fill="#000"/><rect x="3" y="9" width="1.150" height="1.150" rx=".3" fill="#000"/><rect x="4" y="9" width="1.150" height="1.150" rx=".3" fill="#000"/><rect x="15" y="9" width="1.150" height="1.150" rx=".3" fill="#000"/><rect x="0" y="10" width="1.150" height="1.150" rx=".3" fill="#000"/><rect x="4" y="10" width="1.150" height="1.150" rx=".3" fill="#000"/><rect x="14" y="10" width="1.150" height="1.150" rx=".3" fill="#000"/><rect x="1" y="11" width="1.150" height="1.150" rx=".3" fill="#000"/><rect x="14" y="11" width="1.150" height="1.150" rx=".3" fill="#000"/><rect x="2" y="12" width="1.150" height="1.150" rx=".3" fill="#000"/><rect x="14" y="12" width="1.150" height="1.150" rx=".3" fill="#000"/><rect x="2" y="13" width="1.150" height="1.150" rx=".3" fill="#000"/><rect x="13" y="13" width="1.150" height="1.150" rx=".3" fill="#000"/><rect x="3" y="14" width="1.150" height="1.150" rx=".3" fill="#000"/><rect x="13" y="14" width="1.150" height="1.150" rx=".3" fill="#000"/><rect x="4" y="15" width="1.150" height="1.150" rx=".3" fill="#000"/><rect x="12" y="15" width="1.150" height="1.150" rx=".3" fill="#000"/><rect x="5" y="16" width="1.150" height="1.150" rx=".3" fill="#000"/><rect x="12" y="16" width="1.150" height="1.150" rx=".3" fill="#000"/></svg>
<div class="b" style="left:0px;top:882px;width:1441px;height:38px;background:#efefef;"></div>
<div class="b" style="left:4px;top:885.5px;width:221px;height:33px;background:#f2f2f2;border:1px solid #cfcfcf;border-radius:3px;"></div>
<svg class="i" style="left:19px;top:890px" width="26" height="26" viewBox="0 0 26 26"><circle cx="10.200" cy="10.200" r="8.600" fill="none" stroke="#8e8e8e" stroke-width="2.100"/><path d="M16.600 16.600l6.600 6.600" stroke="#8e8e8e" stroke-width="2.400" stroke-linecap="round"/></svg>
<div class="t " style="left:54px;top:892.5px;height:20px;line-height:20px;font-size:14.67px;color:#9a9a9a;letter-spacing:0.333px;">Type to locate (Ctrl+K)</div>
<div class="t " style="left:399px;top:892.5px;height:20px;line-height:20px;font-size:14.67px;color:#3d3d3d;letter-spacing:0.524px;">Coordinate</div>
<div class="b" style="left:481px;top:885.5px;width:137px;height:33px;background:#f2f2f2;border:1px solid #cfcfcf;border-radius:3px;"></div>
<div class="t " style="left:491px;top:892.5px;height:20px;line-height:20px;font-size:14.67px;color:#3d3d3d;letter-spacing:0.276px;">706310,3147881</div>
<svg class="i" style="left:620.5px;top:892.5px;" width="18" height="18" viewBox="0 0 18 18"><g transform="rotate(-40 8.700 9.400)"><rect x="4.200" y="1.600" width="9" height="15.600" rx="4.500" fill="#fff" stroke="#222" stroke-width="1.300"/><path d="M4.200 8.800v-2.700a4.500 4.500 0 0 1 9 0v2.700z" fill="#222"/><path d="M7.200 3v5.300M10.200 3v5.300" stroke="#f4f4f4" stroke-width="1.200"/><circle cx="8.700" cy="12.600" r="1.500" fill="none" stroke="#222" stroke-width="1"/></g><path d="M13 4.200l1-.9M14.800 2.600l.8-.6M.8 10.500l1.600-.3" stroke="#333" stroke-width=".9"/></svg>
<div class="t " style="left:651px;top:892.5px;height:20px;line-height:20px;font-size:14.67px;color:#3d3d3d;letter-spacing:-0.139px;">Scale</div>
<div class="b" style="left:691px;top:887px;width:118px;height:30px;background:#fff;border:1px solid #cdcdcd;border-radius:3px;"></div>
<div class="b" style="left:692px;top:888px;width:86px;height:28px;background:#f1f1f1;border-radius:2px 0 0 2px;"></div>
<div class="t " style="left:695.5px;top:892.5px;height:20px;line-height:20px;font-size:14.67px;color:#3d3d3d;letter-spacing:-0.023px;">1:121051</div>
<svg class="i" style="left:787.500px;top:898px" width="12" height="8" viewBox="0 0 12 8"><path d="M1.500 1.500l4.500 4.500 4.500-4.500" stroke="#444" stroke-width="1.500" fill="none"/></svg>
<svg class="i" style="left:820px;top:894.5px;" width="16" height="16" viewBox="0 0 16 16"><path d="M4.500 8v-3a3.500 3.500 0 0 1 7 0v3" fill="none" stroke="#9a9a9a" stroke-width="1.800"/><rect x="2" y="7.500" width="12" height="8" rx="1.500" fill="#5a5a5a"/></svg>
<div class="t " style="left:843px;top:892.5px;height:20px;line-height:20px;font-size:14.67px;color:#3d3d3d;letter-spacing:0.741px;">Magnifier</div>
<div class="b" style="left:914px;top:887px;width:92px;height:30px;background:#f1f1f1;border:1px solid #cdcdcd;border-radius:3px;"></div>
<div class="t " style="left:923px;top:892.5px;height:20px;line-height:20px;font-size:14.67px;color:#3d3d3d;letter-spacing:-0.254px;">100%</div>
<div class="b" style="left:1085px;top:887px;width:88px;height:30px;background:#f1f1f1;border:1px solid #cdcdcd;border-radius:3px;"></div>
<div class="t " style="left:1016px;top:892.5px;height:20px;line-height:20px;font-size:14.67px;color:#3d3d3d;letter-spacing:0.545px;">Rotation</div>
<div class="t " style="left:1093px;top:892.5px;height:20px;line-height:20px;font-size:14.67px;color:#3d3d3d;letter-spacing:0.133px;">0,0 °</div>
<div class="b" style="left:988px;top:888px;width:17px;height:28px;background:#fff;border-radius:0 2px 2px 0;"></div>
<svg class="i" style="left:992.5px;top:890px" width="10" height="24" viewBox="0 0 10 24"><path d="M1.500 5.700l3.500-3.500 3.500 3.500M1.500 17.300l3.500 3.500 3.500-3.500" stroke="#444" stroke-width="1.300" fill="none"/></svg>
<div class="b" style="left:1154.5px;top:888px;width:17.5px;height:28px;background:#fff;border-radius:0 2px 2px 0;"></div>
<svg class="i" style="left:1159px;top:890px" width="10" height="24" viewBox="0 0 10 24"><path d="M1.500 5.700l3.500-3.500 3.500 3.500M1.500 17.300l3.500 3.500 3.500-3.500" stroke="#444" stroke-width="1.300" fill="none"/></svg>
<svg class="i" style="left:1183px;top:895px" width="14" height="14" viewBox="0 0 14 14"><rect x="0" y="0" width="14" height="14" rx="2.200" fill="#92b372"/><path d="M3.300 7.300l2.500 2.500 5-5.400" stroke="#fff" stroke-width="1.900" fill="none" stroke-linecap="round" stroke-linejoin="round"/></svg>
<div class="t " style="left:1204px;top:892.5px;height:20px;line-height:20px;font-size:14.67px;color:#3d3d3d;letter-spacing:0.315px;">Render</div>
<svg class="i" style="left:1271px;top:894px;" width="16" height="16" viewBox="0 0 16 16"><g fill="none" stroke="#4a4a4a" stroke-width=".9"><circle cx="8" cy="8" r="6.800"/><ellipse cx="8" cy="8" rx="3" ry="6.800"/><path d="M1.200 8h13.600M2.500 4.500h11M2.500 11.500h11M8 1.200v13.600"/><path d="M0 8h1.200M14.800 8h1.200"/></g></svg>
<div class="t " style="left:1291px;top:892.5px;height:20px;line-height:20px;font-size:14.67px;color:#3d3d3d;letter-spacing:-0.263px;">EPSG:26712</div>
<svg class="i" style="left:1395px;top:893.5px;" width="18" height="18" viewBox="0 0 18 18"><path d="M9 2c4.400 0 8 2.800 8 6.300 0 2-1.200 3.800-3 4.900l1.500 3.300-4-2.200c-.8.200-1.600.3-2.500.3-4.400 0-8-2.800-8-6.300s3.600-6.300 8-6.300z" fill="#5a5a5a"/><circle cx="5.500" cy="8.300" r="1.100" fill="#fff"/><circle cx="9" cy="8.300" r="1.100" fill="#fff"/><circle cx="12.500" cy="8.300" r="1.100" fill="#fff"/></svg>
<svg class="i" style="left:4.5px;top:69px" width="3" height="14" viewBox="0 0 3 14"><g fill="#c9c9c9"><circle cx="1.500" cy="2.200" r="1"/><circle cx="1.500" cy="7" r="1"/><circle cx="1.500" cy="11.800" r="1"/></g></svg>
<div class="b" style="left:242px;top:58.5px;width:33px;height:35px;background:#d2d2d2;border:1px solid #c0c0c0;border-radius:3px;"></div>
<svg class="i" style="left:17px;top:64px;" width="24" height="24" viewBox="0 0 24 24"><path d="M4.500 1.500h10l5.500 5.500v15.500h-15.500z" fill="#fff" stroke="#6a6a6a" stroke-width="1"/><path d="M14.500 1.500v5.500h5.500" fill="#f2f2f2" stroke="#6a6a6a" stroke-width="1" stroke-linejoin="round"/></svg>
<svg class="i" style="left:53px;top:64px;" width="24" height="24" viewBox="0 0 24 24"><path d="M1.500 20.500v-16.500h6.500l2 2.500h10v3" fill="#f3d54a" stroke="#c9a820" stroke-width="1"/><path d="M1.500 20.500l3.500-11.500h18l-3.500 11.500z" fill="#fbe163" stroke="#d3b22c" stroke-width="1" stroke-linejoin="round"/></svg>
<svg class="i" style="left:89px;top:64px;" width="24" height="24" viewBox="0 0 24 24"><rect x="2.500" y="1.800" width="19.300" height="20" rx="2.500" fill="#6e97c8" stroke="#4a74ad" stroke-width="1"/><rect x="5.800" y="2.300" width="12.700" height="9" fill="#fafafa"/><path d="M7.300 4.600h9.700M7.300 6.600h9.700M7.300 8.600h9.700" stroke="#555" stroke-width="1"/><rect x="6.800" y="14.300" width="10.700" height="7.200" fill="#e6e6e6"/><rect x="8.500" y="15.800" width="2.800" height="4.500" fill="#2a4a7a"/></svg>
<svg class="i" style="left:125px;top:64px;" width="24" height="24" viewBox="0 0 24 24"><path d="M1.700 2.500h15.500l5.300 5.300v14.200h-20.800z" fill="#fff" stroke="#7a7a7a" stroke-width="1"/><path d="M17.200 2.500v5.300h5.300" fill="#eee" stroke="#7a7a7a" stroke-width="1"/><path d="M7 6.500h11.500v13" fill="none" stroke="#b8cfe8" stroke-width="1"/><path d="M2.200 2.200h11v4.300h-6.500v16h-4.500z" fill="#f0cf3c" stroke="#c4a000" stroke-width="1"/><path d="M4.500 8.500h2M5 11h1.500M4.500 13.500h2M5 16h1.500M4.500 18.500h2M8.500 4.200v2M10.800 4.700v1.500" stroke="#a88400" stroke-width=".8"/><rect x="13" y="13" width="10.500" height="10.500" rx="1.800" fill="#c4a000"/><g stroke="#fff" stroke-width="1.500" stroke-linecap="round"><path d="M18.250 14.800v6.900M15.250 16.500l6 3.500M21.250 16.500l-6 3.500"/></g><circle cx="18.250" cy="18.250" r="1.600" fill="#fff"/></svg>
<svg class="i" style="left:161px;top:64px;" width="24" height="24" viewBox="0 0 24 24"><path d="M1.700 2.500h15.500l5.300 5.300v14.200h-20.800z" fill="#fff" stroke="#7a7a7a" stroke-width="1"/><path d="M17.200 2.500v5.300h5.300" fill="#eee" stroke="#7a7a7a" stroke-width="1"/><rect x="3.800" y="4.500" width="14" height="14.500" fill="none" stroke="#b4c8ea" stroke-width="1"/><path d="M14.500 13.500l7.500 8.500" stroke="#7a6a3a" stroke-width="4.200" stroke-linecap="round"/><path d="M14.500 13.500l7.200 8.200" stroke="#e9c86a" stroke-width="2.400" stroke-linecap="round"/><path d="M9.500 6.500a4 4 0 1 0 6.500 5.500l-2.700-.3-1.500-2.200.7-2.500a4 4 0 0 0-3-.5z" fill="#d6d6d6" stroke="#5e5e5e" stroke-width="1"/></svg>
<svg class="i" style="left:197px;top:64px;" width="24" height="24" viewBox="0 0 24 24"><circle cx="6.800" cy="6.200" r="4.500" fill="#d9622b"/><rect x="2.700" y="13.500" width="8.200" height="8.200" fill="#77a774" stroke="#5c8a5a" stroke-width=".8"/><path d="M14.200 8l6.200-5.200" stroke="#4a78b0" stroke-width="2.300" stroke-linecap="round"/><text x="14.400" y="21.300" font-family="Liberation Sans" font-size="11" fill="#444" stroke="#fff" stroke-width="2.200" paint-order="stroke">a</text></svg>
<svg class="i" style="left:246.5px;top:64px;" width="24" height="24" viewBox="0 0 24 24"><path d="M3.200 7.600C4.200 6.200 6 6.600 8 10V2.200C8 -.2 11.500 -.2 11.500 2.200V3.500C11.500 1 15.300 1 15.300 3.600V5.200C15.300 3 18.800 3 18.800 5.400V7C19 5 21.300 5 21.300 7.200V14C21.300 18 19.500 19.500 18.600 23H10C9 20 6 16 4.500 13C3.500 11 2.200 9 3.200 7.600Z" fill="#fff" stroke="#1a1a1a" stroke-width="1.300" stroke-linejoin="round"/><path d="M11.500 3.500V10M15.300 5.200V10.500M18.800 7V11" stroke="#1a1a1a" stroke-width="1.200"/></svg>
<svg class="i" style="left:282px;top:64px;" width="24" height="24" viewBox="0 0 24 24"><rect x="2.500" y="2.500" width="13.500" height="13.500" fill="#f8e24a" stroke="#dcb400" stroke-width="1"/><g fill="#6895c8" stroke="#3f689e" stroke-width=".7" stroke-linejoin="round"><path d="M12 1l4.600 4.500h-2.600v3h-4v-3h-2.600z"/><path d="M12 23l4.600-4.500h-2.600v-3h-4v3h-2.600z"/><path d="M1 12l4.500-4.600v2.600h3v4h-3v2.600z"/><path d="M23.200 12l-4.500-4.600v2.600h-3v4h3v2.600z"/></g></svg>
<svg class="i" style="left:318px;top:64px;" width="24" height="24" viewBox="0 0 24 24"><path d="M10.044 14.456L1.8 21.8" stroke="#2e3436" stroke-width="3.600" stroke-linecap="round"/><path d="M8.144 16.356L2 21.6" stroke="#edd400" stroke-width="2" stroke-linecap="round"/><circle cx="15" cy="9.5" r="7.3" fill="#f0f0f0" stroke="#2e3436" stroke-width="1.300"/><circle cx="13.8" cy="8" r="4.015" fill="#fff" opacity=".7"/><path d="M15 5.300v8.400M10.800 9.500h8.400" stroke="#4a7ab8" stroke-width="2.300"/></svg>
<svg class="i" style="left:354px;top:64px;" width="24" height="24" viewBox="0 0 24 24"><path d="M10.044 14.456L1.8 21.8" stroke="#2e3436" stroke-width="3.600" stroke-linecap="round"/><path d="M8.144 16.356L2 21.6" stroke="#edd400" stroke-width="2" stroke-linecap="round"/><circle cx="15" cy="9.5" r="7.3" fill="#f0f0f0" stroke="#2e3436" stroke-width="1.300"/><circle cx="13.8" cy="8" r="4.015" fill="#fff" opacity=".7"/><path d="M10.800 9.500h8.400" stroke="#4a7ab8" stroke-width="2.300"/></svg>
<svg class="i" style="left:390px;top:64px;" width="24" height="24" viewBox="0 0 24 24"><path d="M8.600 15.300L2 22" stroke="#2e3436" stroke-width="4" stroke-linecap="round"/><path d="M7.400 16.500L2 22" stroke="#f4d41c" stroke-width="2.300" stroke-linecap="round"/><circle cx="14.500" cy="9.400" r="8" fill="#ececec" stroke="#8a8a8a" stroke-width="1"/><circle cx="13" cy="8" r="4.500" fill="#fff" opacity=".7"/><circle cx="8.300" cy="15.600" r="1.700" fill="#111"/><g fill="#6a98cc" stroke="#3a68a8" stroke-width=".8" stroke-linejoin="round"><path d="M3.600 .5h8l-2.400 2.900 2.600 2.600-2.600 2.600-2.700-2.500-2.900 2.400z"/><path d="M23.700 .5h-8l2.400 2.900-2.600 2.600 2.600 2.600 2.700-2.500 2.900 2.400z"/><path d="M23.700 20.300h-8l2.400-2.900-2.600-2.600 2.600-2.600 2.700 2.500 2.900-2.400z"/></g></svg>
<svg class="i" style="left:426px;top:64px;" width="24" height="24" viewBox="0 0 24 24"><rect x="3" y="4" width="11" height="12.500" fill="#f6e24b" stroke="#c8a800" stroke-width="1"/><path d="M10.4 14.4L1.8 21.8" stroke="#2e3436" stroke-width="3.600" stroke-linecap="round"/><path d="M8.5 16.3L2 21.6" stroke="#edd400" stroke-width="2" stroke-linecap="round"/><circle cx="15.5" cy="9.3" r="7.5" fill="#f0f0f0" stroke="#2e3436" stroke-width="1.300"/><circle cx="14.3" cy="7.8" r="4.125" fill="#fff" opacity=".7"/><path d="M15.500 2.500v13.600a7 7 0 0 1-5-3.600c-1.500-3-.5-8 5-10z" fill="#e9dfb4" opacity=".75"/></svg>
<svg class="i" style="left:462px;top:64px;" width="24" height="24" viewBox="0 0 24 24"><rect x="3" y="4" width="11" height="12.500" fill="#f4f4f4" stroke="#9a9a9a" stroke-width="1"/><path d="M10.4 14.4L1.8 21.8" stroke="#2e3436" stroke-width="3.600" stroke-linecap="round"/><path d="M8.5 16.3L2 21.6" stroke="#edd400" stroke-width="2" stroke-linecap="round"/><circle cx="15.5" cy="9.3" r="7.5" fill="#f0f0f0" stroke="#2e3436" stroke-width="1.300"/><circle cx="14.3" cy="7.8" r="4.125" fill="#fff" opacity=".7"/><path d="M15.500 3v12.600" stroke="#c8c8c8" stroke-width="1"/></svg>
<svg class="i" style="left:498px;top:64px;" width="24" height="24" viewBox="0 0 24 24"><rect x="3" y="4" width="11" height="12.500" fill="#e1e1e1" stroke="#c6c6c6" stroke-width="1"/><path d="M10.1 14.7L1.8 21.8" stroke="#c3c3c3" stroke-width="3" stroke-linecap="round"/><circle cx="15.5" cy="9.3" r="7.5" fill="#dedede" stroke="#c3c3c3" stroke-width="1.200"/><text x="9" y="13.300" font-family="Liberation Sans" font-weight="700" font-size="10" fill="#b4b4b4">1:1</text></svg>
<svg class="i" style="left:534px;top:64px;" width="24" height="24" viewBox="0 0 24 24"><path d="M8.9 14.4L1.8 21.8" stroke="#2e3436" stroke-width="3.600" stroke-linecap="round"/><path d="M7 16.3L2 21.6" stroke="#edd400" stroke-width="2" stroke-linecap="round"/><circle cx="14" cy="9.3" r="7.5" fill="#f0f0f0" stroke="#2e3436" stroke-width="1.300"/><circle cx="12.8" cy="7.8" r="4.125" fill="#fff" opacity=".7"/><rect x="12.500" y="12.500" width="11" height="11" fill="#5a8cc8" stroke="#3a6aa8" stroke-width=".8"/><path d="M21 14.500l-5.500 3.500 5.500 3.500" stroke="#fff" stroke-width="2" fill="none"/></svg>
<svg class="i" style="left:570px;top:64px;" width="24" height="24" viewBox="0 0 24 24"><path d="M8.6 14.7L1.8 21.8" stroke="#c3c3c3" stroke-width="3" stroke-linecap="round"/><circle cx="14" cy="9.3" r="7.5" fill="#dedede" stroke="#c3c3c3" stroke-width="1.200"/><rect x="12.500" y="12.500" width="11" height="11" fill="#c9c9c9" stroke="#bdbdbd" stroke-width=".8"/><path d="M15.500 14.500l5.500 3.500-5.500 3.500" stroke="#dedede" stroke-width="2" fill="none"/></svg>
<svg class="i" style="left:606px;top:64px;" width="24" height="24" viewBox="0 0 24 24"><path d="M4.500 2.500h16.500v19h-14.500a2.200 2.200 0 0 1-2-2.200z" fill="#ececec" stroke="#9c9c9c" stroke-width="1"/><path d="M2.500 2.500h3.500v16.500h-1.500a2 2 0 0 0-2 2z" fill="#fafafa" stroke="#9c9c9c" stroke-width="1"/><rect x="13" y="13" width="10.500" height="10.500" rx="1.800" fill="#c4a000"/><g stroke="#fff" stroke-width="1.500" stroke-linecap="round"><path d="M18.250 14.800v6.900M15.250 16.500l6 3.500M21.250 16.500l-6 3.500"/></g><circle cx="18.250" cy="18.250" r="1.600" fill="#fff"/></svg>
<svg class="i" style="left:642px;top:64px;" width="24" height="24" viewBox="0 0 24 24"><path d="M7.500 1.500h9.500v19.500l-5-1-4.500-4.500z" fill="#6d97c8" stroke="#3c659c" stroke-width="1" stroke-linejoin="round"/><rect x="13" y="13" width="10.500" height="10.500" rx="1.800" fill="#c4a000"/><g stroke="#fff" stroke-width="1.500" stroke-linecap="round"><path d="M18.250 14.800v6.900M15.250 16.500l6 3.500M21.250 16.500l-6 3.500"/></g><circle cx="18.250" cy="18.250" r="1.600" fill="#fff"/></svg>
<svg class="i" style="left:678px;top:64px;" width="24" height="24" viewBox="0 0 24 24"><path d="M4.500 2.500h16.500v19h-14.500a2.200 2.200 0 0 1-2-2.200z" fill="#ececec" stroke="#9c9c9c" stroke-width="1"/><path d="M2.500 2.500h3.500v16.500h-1.500a2 2 0 0 0-2 2z" fill="#fafafa" stroke="#9c9c9c" stroke-width="1"/><path d="M13 1.500h4.500v8l-2.250 2.500-2.250-2.500z" fill="#5b8bc4" stroke="#355f99" stroke-width=".8"/><path d="M15.250 3v6" stroke="#cfe0f4" stroke-width="1"/></svg>
<svg class="i" style="left:714px;top:64px;" width="24" height="24" viewBox="0 0 24 24"><circle cx="12.200" cy="11.700" r="10.400" fill="#fff" stroke="#111" stroke-width="1.600"/><path d="M12.200 5.500v6.800l4 2.600" stroke="#111" stroke-width="1.300" fill="none"/></svg>
<svg class="i" style="left:750px;top:64px;" width="24" height="24" viewBox="0 0 24 24"><defs><linearGradient id="rf" x1="0" y1="0" x2="1" y2="1"><stop offset="0" stop-color="#6aa2e0"/><stop offset="1" stop-color="#3a76c2"/></linearGradient></defs><path d="M1.800 11.300C1.800 5 6 1 10 1C13.200 1 16 2 18.300 4.700L22 2.100V11.600H13L15.700 8.800C13.800 6.600 11.800 5.600 10 5.600C7.500 5.600 5.800 7.800 5.600 11.300Z" fill="url(#rf)"/><path d="M1.800 11.300C1.800 5 6 1 10 1C13.200 1 16 2 18.300 4.700L22 2.100V11.600H13L15.700 8.800C13.800 6.600 11.800 5.600 10 5.600C7.500 5.600 5.800 7.800 5.600 11.300Z" fill="url(#rf)" transform="rotate(180 12 11.850)"/></svg>
<svg class="i" style="left:798px;top:64px;" width="24" height="24" viewBox="0 0 24 24"><circle cx="9.500" cy="9.500" r="8.500" fill="#5b8bc8" stroke="#3f6ca8" stroke-width=".8"/><path d="M9.800 4.200a1.300 1.300 0 1 1 0 2.600 1.300 1.300 0 0 1 0-2.600zM7.200 8.600h3.600l-1.200 5.200h1.600l-.2 1.100h-4.200l.2-1.100h1l1-4.100h-2z" fill="#fff"/><path d="M13.2 10l0 13.500 3.300-3 2.800 5.800 2.400-1.200-2.800-5.700 4.600-.2z" fill="#fff" stroke="#3a3a3a" stroke-width="1" stroke-linejoin="round"/></svg>
<svg class="i" style="left:835px;top:64px;" width="24" height="24" viewBox="0 0 24 24"><g opacity=".55"><path d="M10.500 1.500l1.800 2.200 2.700-.8.700 2.800 2.800.7-.8 2.700 2.200 1.900-2.200 1.800.8 2.700-2.800.7-.7 2.800-2.700-.8-1.800 2.200-1.800-2.200-2.700.8-.7-2.800-2.800-.7.800-2.700-2.200-1.800 2.200-1.900-.8-2.700 2.800-.7.700-2.800 2.700.8z" fill="#d4d4d4" stroke="#b4b4b4" stroke-width=".9"/><circle cx="10.500" cy="10.500" r="5" fill="#c6c6c6" stroke="#b0b0b0" stroke-width=".8"/><path d="M9 8l4 2.500-4 2.500z" fill="#e8e8e8"/><path d="M13.5 10.5l0 13.500 3.300-3 2.800 5.800 2.400-1.200-2.800-5.700 4.600-.2z" fill="#e2e2e2" stroke="#b8b8b8" stroke-width="1" stroke-linejoin="round"/></g></svg>
<svg class="i" style="left:894px;top:64px;" width="24" height="24" viewBox="0 0 24 24"><rect x="1.700" y="1.700" width="21" height="19" fill="#e4e4e4" fill-opacity=".6" stroke="#222" stroke-width="1" stroke-dasharray="2 1.500"/><rect x="2.500" y="2.800" width="13" height="12.700" fill="#f6e24b" stroke="#c8a800" stroke-width="1"/><path d="M10.3 8.2l0 13.500 3.300-3 2.800 5.800 2.400-1.200-2.800-5.700 4.600-.2z" fill="#fff" stroke="#3a3a3a" stroke-width="1" stroke-linejoin="round"/></svg>
<svg class="i" style="left:952px;top:64px;" width="24" height="24" viewBox="0 0 24 24"><rect x="9" y="8.500" width="13" height="13" fill="#f6e24b" stroke="#c8a800" stroke-width="1"/><path d="M13 5c-.5-1.800-2.500-2.700-5-2.700-3 0-4.700 1.500-4.700 3.300 0 1.900 1.700 2.900 4.200 3-3 .2-4.900 1.500-4.900 3.600 0 2.200 2.200 3.400 5.400 3.400 2.500 0 4.600-1 5.700-3" fill="none" stroke="#6a2a78" stroke-width="1.700" stroke-linecap="round"/></svg>
<svg class="i" style="left:1010px;top:64px;" width="24" height="24" viewBox="0 0 24 24"><rect x="2.500" y="2.500" width="13" height="13" fill="#f6e24b" stroke="#c8a800" stroke-width="1"/><rect x="6.500" y="6.500" width="13" height="13" fill="#f6e24b" stroke="#c8a800" stroke-width="1"/><rect x="13.500" y="13.500" width="10" height="10" rx="2" fill="#e01b24"/><circle cx="18.500" cy="18.500" r="3.300" fill="none" stroke="#fff" stroke-width="1.300"/><path d="M16.200 20.800l4.600-4.600" stroke="#fff" stroke-width="1.300"/></svg>
<svg class="i" style="left:1067px;top:64px;" width="24" height="24" viewBox="0 0 24 24"><rect x="2.500" y="2.500" width="20" height="19.500" fill="#fff" stroke="#6a97cc" stroke-width="1"/><rect x="3" y="3" width="19" height="4.500" fill="#dbe7f6"/><path d="M5 5.200h6M13 5.200h7" stroke="#5b8bc8" stroke-width="1.500"/><path d="M5 10h5M5 13h5M5 16h5M5 19h5M12.500 10h7.500M12.500 13h7.500M12.500 16h7.500M12.500 19h7.500" stroke="#6a97cc" stroke-width="1.100"/></svg>
<svg class="i" style="left:1103px;top:64px;" width="24" height="24" viewBox="0 0 24 24"><path d="M3.500 2v19.500M20.500 2v19.500" stroke="#555" stroke-width="1.200"/><path d="M2 21.500h20" stroke="#555" stroke-width="1.600"/><path d="M3.500 5h17M3.500 11.500h17M3.500 17.500h17" stroke="#777" stroke-width=".8"/><path d="M7.5 5l2.400-2.400 2.400 2.400-2.400 2.400z" fill="#f6b0a8" stroke="#cc2222" stroke-width=".9"/><path d="M14.5 5l2.400-2.400 2.400 2.400-2.400 2.400z" fill="#f6b0a8" stroke="#cc2222" stroke-width=".9"/><path d="M5 11.5l2.400-2.400 2.400 2.400-2.400 2.400z" fill="#d8f0d0" stroke="#4c9a4c" stroke-width=".9"/><path d="M9.8 11.5l2.400-2.400 2.400 2.400-2.400 2.400z" fill="#d8f0d0" stroke="#4c9a4c" stroke-width=".9"/><path d="M5 17.5l2.400-2.400 2.400 2.400-2.400 2.400z" fill="#d0e0f6" stroke="#3c6eb0" stroke-width=".9"/><path d="M9.8 17.5l2.400-2.400 2.400 2.400-2.400 2.400z" fill="#d0e0f6" stroke="#3c6eb0" stroke-width=".9"/><path d="M14.6 17.5l2.400-2.400 2.400 2.400-2.400 2.400z" fill="#d0e0f6" stroke="#3c6eb0" stroke-width=".9"/></svg>
<svg class="i" style="left:1139px;top:64px;" width="24" height="24" viewBox="0 0 24 24"><g transform="translate(12 12)"><g fill="#72a0d6" stroke="#4a7ab8" stroke-width=".8"><rect x="-1.900" y="-11" width="3.800" height="7" rx="1.700" transform="rotate(0)"/><rect x="-1.900" y="-11" width="3.800" height="7" rx="1.700" transform="rotate(45)"/><rect x="-1.900" y="-11" width="3.800" height="7" rx="1.700" transform="rotate(90)"/><rect x="-1.900" y="-11" width="3.800" height="7" rx="1.700" transform="rotate(135)"/><rect x="-1.900" y="-11" width="3.800" height="7" rx="1.700" transform="rotate(180)"/><rect x="-1.900" y="-11" width="3.800" height="7" rx="1.700" transform="rotate(225)"/><rect x="-1.900" y="-11" width="3.800" height="7" rx="1.700" transform="rotate(270)"/><rect x="-1.900" y="-11" width="3.800" height="7" rx="1.700" transform="rotate(315)"/></g><circle r="6" fill="#72a0d6" stroke="#4a7ab8" stroke-width=".8"/><circle r="2.200" fill="#e8f0fa" stroke="#4a7ab8" stroke-width=".8"/></g></svg>
<svg class="i" style="left:1175px;top:64px;" width="24" height="24" viewBox="0 0 24 24"><path d="M3.500 2.500h15.500v4.500h-1.200c-.3-1.700-1-2-2.800-2h-6.500l5.500 7-6 7.500h7.500c2 0 2.800-.6 3.300-2.700h1.200l-.8 5.200h-15.700v-1l7-8.700-7-8.800z" fill="#a000a0" stroke="#8a0a8a" stroke-width=".6"/></svg>
<svg class="i" style="left:1211px;top:64px;" width="24" height="24" viewBox="0 0 24 24"><rect x="2.500" y="14.500" width="19.500" height="6.500" rx="1" fill="#e6e6e6" stroke="#555" stroke-width="1.200"/><path d="M5.500 15v3M8.500 15v2M11.500 15v3M14.500 15v2M17.500 15v3M20 15v2" stroke="#555" stroke-width=".9"/><path d="M3.500 11.500h17.500" stroke="#2c4f80" stroke-width="1.400"/><path d="M4.500 10.500l12-6.500" stroke="#444" stroke-width="1"/><path d="M10.500 5.500c1.500 1.500 2.300 3.500 2.300 6" stroke="#5b8bc8" stroke-width="1" fill="none"/></svg>
<svg class="i" style="left:1269px;top:64px;" width="24" height="24" viewBox="0 0 24 24"><path d="M5 2h14.500a3 3 0 0 1 3 3v7a3 3 0 0 1-3 3h-6.500l-4.500 5 .5-5h-4a3 3 0 0 1-3-3v-7a3 3 0 0 1 3-3z" fill="#fdf1a4" stroke="#d4b21c" stroke-width="1.300"/><circle cx="6" cy="19.500" r="3" fill="#73b873" stroke="#999" stroke-width="1"/></svg>
<svg class="i" style="left:1305px;top:64px;" width="24" height="24" viewBox="0 0 24 24"><path d="M2.500 2.500h19v13h-12l-6.500 5 3-5h-3.500z" fill="#eef2f6" stroke="#9aa0a8" stroke-width="1" stroke-linejoin="round"/><path d="M7 4.500h10v2.300h-.6c-.2-1.100-.6-1.400-1.800-1.400h-1.500v6.600c0 .8.300 1 1.300 1v.6h-4.800v-.6c1 0 1.300-.2 1.300-1v-6.600h-1.500c-1.200 0-1.600.3-1.800 1.400h-.6z" fill="#3a3a3a"/></svg>
<svg class="i" style="left:232.5px;top:69px" width="3" height="14" viewBox="0 0 3 14"><g fill="#c9c9c9"><circle cx="1.500" cy="2.200" r="1"/><circle cx="1.500" cy="7" r="1"/><circle cx="1.500" cy="11.800" r="1"/></g></svg>
<svg class="i" style="left:784.5px;top:69px" width="3" height="14" viewBox="0 0 3 14"><g fill="#c9c9c9"><circle cx="1.500" cy="2.200" r="1"/><circle cx="1.500" cy="7" r="1"/><circle cx="1.500" cy="11.800" r="1"/></g></svg>
<svg class="i" style="left:870px;top:72px" width="12" height="8" viewBox="0 0 12 8"><path d="M1.500 1.500l4.500 4.500 4.500-4.500" stroke="#9a9a9a" stroke-width="1.5" fill="none"/></svg>
<svg class="i" style="left:928px;top:72px" width="12" height="8" viewBox="0 0 12 8"><path d="M1.500 1.500l4.500 4.500 4.500-4.500" stroke="#555" stroke-width="1.5" fill="none"/></svg>
<svg class="i" style="left:986px;top:72px" width="12" height="8" viewBox="0 0 12 8"><path d="M1.500 1.500l4.500 4.500 4.500-4.500" stroke="#555" stroke-width="1.5" fill="none"/></svg>
<svg class="i" style="left:1044px;top:72px" width="12" height="8" viewBox="0 0 12 8"><path d="M1.500 1.500l4.500 4.500 4.500-4.500" stroke="#555" stroke-width="1.5" fill="none"/></svg>
<svg class="i" style="left:1245.5px;top:72px" width="12" height="8" viewBox="0 0 12 8"><path d="M1.500 1.500l4.500 4.500 4.500-4.500" stroke="#555" stroke-width="1.5" fill="none"/></svg>
<svg class="i" style="left:1340.5px;top:72px" width="12" height="8" viewBox="0 0 12 8"><path d="M1.500 1.500l4.500 4.500 4.500-4.500" stroke="#555" stroke-width="1.5" fill="none"/></svg>
<svg class="i" style="left:4.5px;top:109px" width="3" height="14" viewBox="0 0 3 14"><g fill="#c9c9c9"><circle cx="1.500" cy="2.200" r="1"/><circle cx="1.500" cy="7" r="1"/><circle cx="1.500" cy="11.800" r="1"/></g></svg>
<div class="b" style="left:1247px;top:98px;width:34px;height:35px;background:#d2d2d2;border:1px solid #c0c0c0;border-radius:3px;"></div>
<svg class="i" style="left:17px;top:104px;" width="24" height="24" viewBox="0 0 24 24"><g transform="rotate(-18 9 15)"><rect x="2" y="8" width="12" height="12" fill="#e0642c" stroke="#b84a1c" stroke-width=".6"/></g><g transform="rotate(-8 10 12)"><rect x="4" y="5" width="12" height="12" fill="#f2c43a" stroke="#c89a1c" stroke-width=".6"/></g><g transform="rotate(10 15 8)"><rect x="8.500" y="1.500" width="13" height="13" fill="#6c97cb" stroke="#3f6aa5" stroke-width=".9"/></g><g transform="translate(14.8 14.8)"><rect width="9.2" height="9.2" rx="1.500" fill="#5a9a58"/><path d="M4.6 1.700v5.8M1.700 4.6h5.8" stroke="#fff" stroke-width="2"/></g></svg>
<svg class="i" style="left:53px;top:104px;" width="24" height="24" viewBox="0 0 24 24"><path d="M1.500 9l9.500-3.500 12 4v9l-11.500 5-10-6z" fill="#f0d43a" stroke="#7a6a10" stroke-width=".8" stroke-linejoin="round"/><path d="M1.500 9l10 5.500v9l-10-6z" fill="#d8b80c" stroke="#7a6a10" stroke-width=".8" stroke-linejoin="round"/><path d="M11.500 14.500l11.500-5v9l-11.500 5z" fill="#f8e878" stroke="#7a6a10" stroke-width=".8" stroke-linejoin="round"/><circle cx="12" cy="7.500" r="6.800" fill="#8cb4e6" stroke="#3f74c0" stroke-width=".9"/><path d="M8 5c1.500-1.500 3-1 4 0s2.500 1 3.500 0M7.500 9c1 1 2.500 1.500 3.500.5s3 0 4 1.500" stroke="#2f5ea0" stroke-width="1.400" fill="none"/><ellipse cx="12" cy="7.500" rx="3" ry="6.800" fill="none" stroke="#c8dcf4" stroke-width=".7"/><path d="M5.300 7.500h13.400" stroke="#c8dcf4" stroke-width=".7"/><g transform="translate(14.8 14.8)"><rect width="9.2" height="9.2" rx="1.500" fill="#c4a000"/><g stroke="#fff" stroke-width="1.400" stroke-linecap="round"><path d="M4.6 1.600v6 M1.900 2.53l5.4 3.132 M7.3 2.53l-5.4 3.132"/></g></g></svg>
<svg class="i" style="left:89px;top:104px;" width="24" height="24" viewBox="0 0 24 24"><path d="M2.500 2.500l6.500 14 7-14h5" fill="none" stroke="#2e3436" stroke-width="1.300" stroke-linejoin="round"/><g fill="#fff" stroke="#2e3436" stroke-width="1"><path d="M2.500 .800l1.700 1.700-1.700 1.700-1.700-1.700z"/><circle cx="9" cy="16.800" r="1.700"/><circle cx="16" cy="2.500" r="1.700"/><circle cx="21.200" cy="2.500" r="1.700"/></g><g transform="translate(14.8 14.8)"><rect width="9.2" height="9.2" rx="1.500" fill="#c4a000"/><g stroke="#fff" stroke-width="1.400" stroke-linecap="round"><path d="M4.6 1.600v6 M1.900 2.53l5.4 3.132 M7.3 2.53l-5.4 3.132"/></g></g></svg>
<svg class="i" style="left:125px;top:104px;" width="24" height="24" viewBox="0 0 24 24"><path d="M23 .800c-8 1-15 7-19 17l-2 5.200 1 .500 2.500-5c6-2 12-6 15-11.500 1.500-2.500 2.500-4.500 2.500-6.200z" fill="#9cbfe8" stroke="#3f6ea8" stroke-width=".9" stroke-linejoin="round"/><path d="M21.500 2.500c-7 3-13 9-17 17" stroke="#3f6ea8" stroke-width=".8" fill="none"/><path d="M19 3.500l-3 6M16 5.500l-4 7.500M12.500 8.500l-4 7" stroke="#dbe8f8" stroke-width=".8"/><g transform="translate(14.8 14.8)"><rect width="9.2" height="9.2" rx="1.500" fill="#c4a000"/><g stroke="#fff" stroke-width="1.400" stroke-linecap="round"><path d="M4.6 1.600v6 M1.900 2.53l5.4 3.132 M7.3 2.53l-5.4 3.132"/></g></g></svg>
<svg class="i" style="left:161px;top:104px;" width="24" height="24" viewBox="0 0 24 24"><rect x="2.500" y="6.500" width="18.500" height="10" rx="1" fill="#6c97cb" stroke="#3f6aa5" stroke-width="1"/><path d="M5.500 2.500v4M9 2.500v4M12.500 2.500v4M16 2.500v4M5.500 16.500v4M9 16.500v4M12.500 16.500v4" stroke="#3f6aa5" stroke-width="1.200"/><g transform="translate(14.8 14.8)"><rect width="9.2" height="9.2" rx="1.500" fill="#c4a000"/><g stroke="#fff" stroke-width="1.400" stroke-linecap="round"><path d="M4.6 1.600v6 M1.900 2.53l5.4 3.132 M7.3 2.53l-5.4 3.132"/></g></g></svg>
<svg class="i" style="left:208.5px;top:104px;" width="24" height="24" viewBox="0 0 24 24"><rect x="1" y="1" width="21.500" height="22" rx="2.500" fill="#a9c4e4" stroke="#5c88bd" stroke-width="1"/><path d="M2 2h19.500v8c-6 0-12 3-19.500 9z" fill="#c4d7ee" opacity=".6"/><path d="M2.500 2.500l6 15 6.500-15h5.500" fill="none" stroke="#2e3436" stroke-width="1.300" stroke-linejoin="round"/><g fill="#fff" stroke="#4a4a4a" stroke-width=".9"><circle cx="2.800" cy="2.800" r="1.500"/><circle cx="8.500" cy="17.800" r="1.600"/><circle cx="15" cy="2.800" r="1.500"/><circle cx="20.800" cy="2.800" r="1.500"/></g><g transform="translate(14.8 14.8)"><rect width="9.2" height="9.2" rx="1.500" fill="#c4a000"/><g stroke="#fff" stroke-width="1.400" stroke-linecap="round"><path d="M4.6 1.600v6 M1.900 2.53l5.4 3.132 M7.3 2.53l-5.4 3.132"/></g></g></svg>
<svg class="i" style="left:255.5px;top:104px;" width="24" height="24" viewBox="0 0 24 24"><g transform="translate(-1 0)"><path d="M12.500 .500l5 2.200-9.800 16.800-5.700 4 .7-6.800z" fill="#c4c4c1" stroke="#b6b6b3" stroke-width=".9" stroke-linejoin="round"/><path d="M2.700 16.700l5 2.800-5.700 4z" fill="#bebebe" stroke="#b6b6b3" stroke-width=".7"/></g><g transform="translate(4 1)"><path d="M12.500 .500l5 2.200-9.800 16.800-5.700 4 .7-6.800z" fill="#c8c8c4" stroke="#b8b8b5" stroke-width=".9" stroke-linejoin="round"/><path d="M2.700 16.700l5 2.800-5.700 4z" fill="#bebebe" stroke="#b8b8b5" stroke-width=".7"/></g></svg>
<svg class="i" style="left:299px;top:104px;" width="24" height="24" viewBox="0 0 24 24"><path d="M13.500 .500l5 2.500-9.500 16.500-6 4.200.8-7z" fill="#eddb22" stroke="#555" stroke-width=".9" stroke-linejoin="round"/><path d="M16 1.700l-9.800 16.800" stroke="#6a8a1a" stroke-width="1.200"/><path d="M12.500 2.200l5 2.500" stroke="#ddd" stroke-width="1.600"/><path d="M3.800 16.700l5.200 2.800-6 4.200z" fill="#e8e8e8" stroke="#555" stroke-width=".8" stroke-linejoin="round"/><path d="M3.300 21.200l1.800 1-2.100 1.500z" fill="#222"/></svg>
<svg class="i" style="left:335px;top:104px;" width="24" height="24" viewBox="0 0 24 24"><rect x="1.500" y="1.500" width="19" height="19" rx="2" fill="#c6c6c6" stroke="#b6b6b6" stroke-width="1"/><rect x="4.500" y="2" width="12.500" height="8.500" fill="#d6d6d6"/><path d="M6 4.500h9.500M6 6.500h9.500M6 8.500h9.500" stroke="#c4c4c4" stroke-width=".9"/><rect x="5.500" y="13.500" width="10.500" height="7" fill="#d8d8d8"/><rect x="7" y="15" width="2.500" height="4" fill="#c2c2c2"/><path d="M20.500 9.500l3 1.500-6.500 11-3.500 2 .5-3.800z" fill="#d0d0cc" stroke="#c2c2bf" stroke-width=".8"/></svg>
<svg class="i" style="left:371px;top:104px;" width="24" height="24" viewBox="0 0 24 24"><g fill="#cecece" stroke="#bdbdbd" stroke-width=".9"><circle cx="10" cy="3.800" r="2.300"/><circle cx="19" cy="5.500" r="2.300"/><circle cx="3.300" cy="11.800" r="2.300"/></g><g transform="translate(13.5 13.5)"><rect width="10.5" height="10.5" rx="1.500" fill="#c5c3b6"/><g stroke="#dcdcd8" stroke-width="1.400" stroke-linecap="round"><path d="M5.25 1.600v7.3 M1.900 2.8875l6.7 3.886 M8.6 2.8875l-6.7 3.886"/></g></g></svg>
<svg class="i" style="left:407px;top:104px;" width="24" height="24" viewBox="0 0 24 24"><g stroke="#b6b6b6" fill="none" stroke-width="1"><circle cx="6.500" cy="4.500" r="2.800"/><path d="M4.500 2.500l4 4M8.500 2.500l-4 4"/><path d="M6 7l-3.500 12M9.500 4h10M9 6.500h11"/></g><path d="M9 14.500l8-4 3.500 1.500-8.500 4.500z" fill="#cbcbc8" stroke="#c0c0bd" stroke-width=".8"/><path d="M12 12l9.500 9.500-2 2-9.500-9.500z" fill="#c9c7bc" stroke="#c0bfb6" stroke-width=".6"/></svg>
<svg class="i" style="left:465px;top:104px;" width="24" height="24" viewBox="0 0 24 24"><g fill="#cac8bf" stroke="#bab8ae" stroke-width=".9"><rect x="1.500" y="2.500" width="18" height="5.500"/><rect x="1.500" y="9.500" width="18" height="5.500"/><rect x="1.500" y="16.500" width="18" height="5.500"/></g><path d="M18.500 1l3 1.500-9.500 17.500-4 3 .5-4.500z" fill="#d4d4d2" stroke="#c0c0be" stroke-width=".9" stroke-linejoin="round"/></svg>
<svg class="i" style="left:501px;top:104px;" width="24" height="24" viewBox="0 0 24 24"><g fill="#cac8c5" stroke="#b8b6b2" stroke-width=".9"><rect x="2.500" y="2.500" width="14" height="12"/><rect x="5" y="7.500" width="14" height="14"/></g><path d="M4 5h11M7.500 10.500v9M10.500 10.500v9M13.500 10.500v9M16.500 10.500v9" stroke="#c6bcb8" stroke-width="1.200"/><path d="M5 21.500h14" stroke="#d8b8b8" stroke-width="1" stroke-dasharray="1.500 1.500"/></svg>
<svg class="i" style="left:537px;top:104px;" width="24" height="24" viewBox="0 0 24 24"><g fill="none" stroke="#b6b6b6" stroke-width="1.200"><path d="M1.500 7.500l13 6.500M1.500 15l13-6"/><ellipse cx="18" cy="7.500" rx="3.500" ry="2.500" transform="rotate(-25 18 7.500)"/><ellipse cx="18.500" cy="16.500" rx="3.500" ry="2.500" transform="rotate(25 18.500 16.500)"/></g></svg>
<svg class="i" style="left:573px;top:104px;" width="24" height="24" viewBox="0 0 24 24"><g fill="#d2d2d2" stroke="#b4b4b4" stroke-width="1"><path d="M8.500 1.500h7l4 4v13h-11z"/><path d="M3.500 6.500h7l4 4v12h-11z"/></g><path d="M5.500 13h7M5.500 15h7M5.500 17h7M5.500 19h7" stroke="#c6c6c6" stroke-width=".9"/></svg>
<svg class="i" style="left:609px;top:104px;" width="24" height="24" viewBox="0 0 24 24"><rect x="3.500" y="3.500" width="17" height="19" rx="1" fill="#cbc9c3" stroke="#b8b6b0" stroke-width="1"/><rect x="7.500" y="1.500" width="9" height="4" rx="1" fill="#c2c2c2" stroke="#b4b4b4" stroke-width=".8"/><path d="M6.500 6.500h8l3 3v11h-11z" fill="#d6d6d6" stroke="#b8b8b8" stroke-width=".9"/><path d="M8.500 12h6.500M8.500 14h6.500M8.500 16h6.500M8.500 18h6.500" stroke="#c6c6c6" stroke-width=".9"/></svg>
<svg class="i" style="left:645px;top:104px;" width="24" height="24" viewBox="0 0 24 24"><path d="M9.500 2.500l-8 6.500 8 6.500v-4c5 0 7.500 2 6 7.500-.3 1 .8 1.300 1.300.4 3.500-6.500.7-13-7.300-13z" fill="#c2c0b8" stroke="#b6b4ae" stroke-width=".8" stroke-linejoin="round"/></svg>
<svg class="i" style="left:681px;top:104px;" width="24" height="24" viewBox="0 0 24 24"><path d="M14.500 2.500l8 6.500-8 6.500v-4c-5 0-7.500 2-6 7.500.3 1-.8 1.300-1.300.4-3.500-6.500-.7-13 7.300-13z" fill="#c2c2c2" stroke="#b6b6b6" stroke-width=".8" stroke-linejoin="round"/></svg>
<svg class="i" style="left:729px;top:104px;" width="24" height="24" viewBox="0 0 24 24"><path d="M1.5 9.5l4.500-5.2h16v10.4h-16z" fill="#f5dc3c" stroke="#c4a000" stroke-width="1.2" stroke-linejoin="round"/><text x="6.3" y="12.3" font-family="Liberation Sans" font-weight="700" font-size="8.400" fill="#3a3a2a">abc</text></svg>
<svg class="i" style="left:765px;top:104px;" width="24" height="24" viewBox="0 0 24 24"><circle cx="9.700" cy="8.600" r="6.700" fill="#d42a1a" stroke="#7a1a10" stroke-width=".6"/><path d="M9.700 8.600l-5.200-4.300a6.700 6.700 0 0 1 10.400 0z" fill="#f4d40c"/><path d="M9.700 8.600v6.700a6.700 6.700 0 0 1-5.200-11z" fill="#0aa040"/><circle cx="9.700" cy="8.600" r="6.700" fill="none" stroke="#5a2a10" stroke-width=".7"/><rect x="11" y="16.500" width="4" height="6" fill="#f4d40c" stroke="#c8a000" stroke-width=".6"/><rect x="15.300" y="10.500" width="3.600" height="12" fill="#0aa040" stroke="#076a2a" stroke-width=".6"/><rect x="19.200" y="17" width="3.800" height="5.500" fill="#c4160c" stroke="#7a1a10" stroke-width=".6"/></svg>
<svg class="i" style="left:812px;top:104px;" width="24" height="24" viewBox="0 0 24 24"><path d="M1.5 9.5l4.500-5.2h16v10.4h-16z" fill="#dbe8f8" stroke="#5a96e0" stroke-width="1.2" stroke-linejoin="round"/><text x="6.3" y="12.3" font-family="Liberation Sans" font-weight="700" font-size="8.400" fill="#2e3436">ab</text><path d="M17.500 7l1.800-.5 1 6.500-1.800.2z" fill="#f4f4f4" stroke="#888" stroke-width=".6"/><circle cx="20" cy="17.800" r="4.800" fill="#a82a1c" stroke="#7a3a6a" stroke-width=".7"/><circle cx="18.800" cy="16.300" r="1.500" fill="#c85a4a"/></svg>
<svg class="i" style="left:848px;top:104px;" width="24" height="24" viewBox="0 0 24 24"><path d="M1.5 9.5l4.500-5.2h16v10.4h-16z" fill="#f8e4e4" stroke="#f01818" stroke-width="1.5" stroke-linejoin="round"/><text x="6.3" y="12.3" font-family="Liberation Sans" font-weight="700" font-size="8.400" fill="#e01010">abc</text></svg>
<svg class="i" style="left:896px;top:104px;" width="24" height="24" viewBox="0 0 24 24"><path d="M0.5 8.25l4.500-5.25h16v10.5h-16z" fill="#cbc9c0" stroke="#b9b7ae" stroke-width="1.2" stroke-linejoin="round"/><text x="5.3" y="11.05" font-family="Liberation Sans" font-weight="700" font-size="8.400" fill="#b0b0ae">ab</text><path d="M16.500 6l1.600-.4 1 6-1.600.2z" fill="#dcdcdc" stroke="#c0c0c0" stroke-width=".6"/><circle cx="19" cy="17.500" r="4.600" fill="#c3c1bf" stroke="#bcb8b8" stroke-width=".6"/></svg>
<svg class="i" style="left:932px;top:104px;" width="24" height="24" viewBox="0 0 24 24"><path d="M0.5 8.25l4.500-5.25h16v10.5h-16z" fill="#cbc9c0" stroke="#b9b7ae" stroke-width="1.2" stroke-linejoin="round"/><text x="5.3" y="11.05" font-family="Liberation Sans" font-weight="700" font-size="8.400" fill="#b0b0ae">abc</text><path d="M8.500 18.500c3.500-4.500 9.500-4.500 13.500 0-4 4-10 4-13.500 0z" fill="#dadada" stroke="#bdbdbd" stroke-width="1"/><circle cx="15.300" cy="18.300" r="2.300" fill="#b8b8b8"/></svg>
<svg class="i" style="left:968px;top:104px;" width="24" height="24" viewBox="0 0 24 24"><path d="M0.5 8.25l4.500-5.25h16v10.5h-16z" fill="#cbc9c0" stroke="#b9b7ae" stroke-width="1.2" stroke-linejoin="round"/><text x="5.3" y="11.05" font-family="Liberation Sans" font-weight="700" font-size="8.400" fill="#b0b0ae">abc</text><rect x="14.500" y="13.500" width="10" height="10" rx="1.500" fill="#c0c0c0"/><path d="M16 17.300h3.800v-2.300l4 3.500-4 3.500v-2.300h-3.800z" fill="#e4e4e4"/></svg>
<svg class="i" style="left:1004px;top:104px;" width="24" height="24" viewBox="0 0 24 24"><path d="M0.5 8.25l4.500-5.25h16v10.5h-16z" fill="#cbc9c0" stroke="#b9b7ae" stroke-width="1.2" stroke-linejoin="round"/><text x="5.3" y="11.05" font-family="Liberation Sans" font-weight="700" font-size="8.400" fill="#b0b0ae">abc</text><rect x="14.500" y="13.500" width="10" height="10" rx="1.500" fill="#c0c0c0"/><path d="M17.200 20.500a3 3 0 1 1 3.200 1" stroke="#e4e4e4" stroke-width="1.500" fill="none"/><path d="M18.500 19l3 3.500h-4z" fill="#e4e4e4"/></svg>
<svg class="i" style="left:1040px;top:104px;" width="24" height="24" viewBox="0 0 24 24"><path d="M0.5 8.25l4.500-5.25h16v10.5h-16z" fill="#cbc9c0" stroke="#b9b7ae" stroke-width="1.2" stroke-linejoin="round"/><text x="5.3" y="11.05" font-family="Liberation Sans" font-weight="700" font-size="8.400" fill="#b0b0ae">abc</text><rect x="14.500" y="13.500" width="10" height="10" rx="1.500" fill="#c5c3ba"/><path d="M22 15l1.500 1.500-5 5-2.500 1 1-2.500z" fill="#e4e4e0"/></svg>
<svg class="i" style="left:1088px;top:104px;" width="24" height="24" viewBox="0 0 24 24"><defs><radialGradient id="gga" cx=".5" cy=".45" r=".55"><stop offset="0" stop-color="#6aa0f0"/><stop offset=".35" stop-color="#dfe6f0"/><stop offset="1" stop-color="#7a7a7a"/></radialGradient></defs><circle cx="12" cy="11" r="11.200" fill="url(#gga)" stroke="#4a8ae0" stroke-width="1.100"/><g fill="none" stroke="#4a8ae0" stroke-width=".9"><ellipse cx="12" cy="11" rx="4.800" ry="11.200"/><path d="M.8 11h22.400M2.800 5.500h18.400M2.800 16.500h18.400M12 -.2v22.400"/></g><g fill="#4a4a4a" opacity=".55"><path d="M12 1l3.500 4h-7z"/><path d="M12 21l3.500-4h-7z"/><path d="M2 7h4.500v8h-4.500z"/><path d="M17.500 7h4.500v8h-4.500z"/></g><g transform="translate(14.5 14.5)"><rect width="9.5" height="9.5" rx="1.500" fill="#5a9a58"/><path d="M4.75 1.700v6.1M1.700 4.75h6.1" stroke="#fff" stroke-width="2"/></g></svg>
<svg class="i" style="left:1131px;top:104px;" width="24" height="24" viewBox="0 0 24 24"><defs><radialGradient id="ggb" cx=".5" cy=".45" r=".55"><stop offset="0" stop-color="#6aa0f0"/><stop offset=".35" stop-color="#dfe6f0"/><stop offset="1" stop-color="#7a7a7a"/></radialGradient></defs><circle cx="12" cy="11" r="11.200" fill="url(#ggb)" stroke="#4a8ae0" stroke-width="1.100"/><g fill="none" stroke="#4a8ae0" stroke-width=".9"><ellipse cx="12" cy="11" rx="4.800" ry="11.200"/><path d="M.8 11h22.400M2.800 5.500h18.400M2.800 16.500h18.400M12 -.2v22.400"/></g><g fill="#4a4a4a" opacity=".55"><path d="M12 1l3.500 4h-7z"/><path d="M12 21l3.500-4h-7z"/><path d="M2 7h4.500v8h-4.500z"/><path d="M17.500 7h4.500v8h-4.500z"/></g><rect x="14.500" y="14.500" width="9.500" height="9.500" rx="1.500" fill="#5a9a58"/><circle cx="18.500" cy="18.300" r="2.300" fill="none" stroke="#fff" stroke-width="1.300"/><path d="M20.200 20.200l2.300 2.300" stroke="#fff" stroke-width="1.500"/></svg>
<svg class="i" style="left:1167px;top:104px;" width="24" height="24" viewBox="0 0 24 24"><circle cx="12" cy="12" r="11" fill="#a4d48c" stroke="#22b03c" stroke-width="1.400"/><path d="M4.500 8.500c1-4 5-6.500 9-6 1 .3-1.200 2.300-.5 3.500.7 1 2.500 0 3 1.500-1.500.5-2.500 0-3.500 1-1.500 1.500-2 3-4.500 4.500-2.200 1.200-4-1.500-3.500-4.500z" fill="#0a9a3c"/><circle cx="12" cy="12" r="10.200" fill="none" stroke="#d8f0c8" stroke-width=".6" stroke-dasharray="1 1.500" opacity=".7"/></svg>
<svg class="i" style="left:1203px;top:104px;" width="24" height="24" viewBox="0 0 24 24"><circle cx="12" cy="10.500" r="11.300" fill="#b4cdf0" stroke="#2f5ea8" stroke-width="1"/><g stroke="#1f4a98" stroke-width="1" fill="none"><ellipse cx="12" cy="10.500" rx="5" ry="11.300"/><path d="M.8 10.500h22.400M3 5h18M3 15.500h18"/></g><g fill="#e8f0fa" opacity=".8"><rect x="4" y="6" width="3" height="3"/><rect x="9" y="6" width="2.500" height="3"/><rect x="13.500" y="6" width="3" height="3"/><rect x="6" y="11" width="3" height="2.500"/></g><path d="M7.500 13l3 0 1.500 2 1.500-2 3 0 5.500 7.500c.8 3.500-6.500 4-7.500 1l-.8-2.500h-3.400l-.8 2.500c-1 3-8.300 2.500-7.500-1z" fill="#050505"/><ellipse cx="6" cy="21.300" rx="3" ry="1.300" fill="#d9d9d9"/><ellipse cx="18" cy="21.300" rx="3" ry="1.300" fill="#d9d9d9"/></svg>
<svg class="i" style="left:1252px;top:104px;" width="24" height="24" viewBox="0 0 24 24"><g transform="translate(1.300 1.400) scale(.9)"><path d="M11 1.500c-4.500 0-5 2-5 3.500v2.500h5.500v1h-8c-2 0-3.300 1.500-3.300 5s1.300 5 3.300 5h2v-3c0-2 1.500-3.500 3.500-3.500h5c1.700 0 3-1.300 3-3v-4c0-2-1.500-3.500-6-3.500z" fill="#3a72a8"/><circle cx="8.300" cy="4.300" r="1" fill="#fff"/><path d="M12.500 22.500c4.500 0 5-2 5-3.500v-2.500h-5.500v-1h8c2 0 3.300-1.500 3.300-5s-1.300-5-3.300-5h-2v3c0 2-1.500 3.500-3.500 3.500h-5c-1.700 0-3 1.300-3 3v4c0 2 1.500 3.500 6 3.500z" fill="#f6cf3e"/><circle cx="15.200" cy="19.700" r="1" fill="#fff"/></g><path d="M17 17.200l5.800 2.500-5.800 2.500" stroke="#555" stroke-width="1.300" fill="none"/></svg>
<svg class="i" style="left:1288px;top:104px;" width="24" height="24" viewBox="0 0 24 24"><path d="M.600 9.500v13h12.500" stroke="#8a8a8a" fill="none" stroke-width="1"/><rect x="2.500" y="5.500" width="15" height="15" fill="#e6e6e6" stroke="#7a7a7a" stroke-width="1"/><text x="4.200" y="18.500" font-family="Liberation Sans" font-size="15" fill="#1a1a1a">Ø</text><rect x="14" y="14" width="10.200" height="10" rx="2" fill="#e8555c"/><rect x="15.600" y="17.700" width="7" height="2.600" fill="#fff"/></svg>
<svg class="i" style="left:1361px;top:104px;" width="24" height="24" viewBox="0 0 24 24"><rect x="2.500" y="1.500" width="19.500" height="21" rx="1" fill="#b9b9b9" stroke="#b0b0b0" stroke-width=".8"/><rect x="2.500" y="1.500" width="4.500" height="21" fill="#a6a6a6"/><text x="11" y="16.500" font-family="Liberation Sans" font-size="14" fill="#d8d8d8">?</text></svg>
<svg class="i" style="left:1409px;top:104px;" width="24" height="24" viewBox="0 0 24 24"><path d="M3.200 2.800l8.800 5.100 9.800-5.100M12 7.900l-8.600 13.100" stroke="#2f5a98" stroke-width="1" fill="none"/><path d="M6 7.500c2-1.500 4-2 6.500-2.600 3-.7 6-2 8.500-2.500 1.500 1 2 3 1.500 5-.3 1.500-1.500 2.500-3.500 2.800-2 .3-4 .2-5 1.500-1 1.400-.8 3.500-1.500 5-.8 1.500-2.500 2-4 1.500-2-.7-3.500-2.500-4-4.500-.5-2.200-.2-4.700 1.500-6.200z" fill="#6a98cc" stroke="#3a68a8" stroke-width="1" stroke-linejoin="round"/><path d="M12 7.900l9-4.500M12 7.900l-6 9.500M6.500 7.500l5.500 .4" stroke="#2f5a98" stroke-width=".9" fill="none"/><g fill="#f8e020" stroke="#4a70a0" stroke-width=".8"><circle cx="3.200" cy="2.800" r="2.200"/><circle cx="12" cy="7.900" r="1.900"/><circle cx="21.800" cy="2.800" r="2.200"/><circle cx="3.400" cy="21" r="2.200"/></g><path d="M12.800 16.300l3 6.300 7.400-10.400-6.800 6.800z" fill="#f4d81c" stroke="#5a4a10" stroke-width=".8" stroke-linejoin="round"/></svg>
<div class="b" style="left:196px;top:104px;width:1px;height:24px;background:#cfcfcf;"></div>
<div class="b" style="left:801px;top:104px;width:1px;height:24px;background:#cfcfcf;"></div>
<div class="b" style="left:884px;top:104px;width:1px;height:24px;background:#cfcfcf;"></div>
<svg class="i" style="left:244.5px;top:109px" width="3" height="14" viewBox="0 0 3 14"><g fill="#c9c9c9"><circle cx="1.500" cy="2.200" r="1"/><circle cx="1.500" cy="7" r="1"/><circle cx="1.500" cy="11.800" r="1"/></g></svg>
<svg class="i" style="left:717.5px;top:109px" width="3" height="14" viewBox="0 0 3 14"><g fill="#c9c9c9"><circle cx="1.500" cy="2.200" r="1"/><circle cx="1.500" cy="7" r="1"/><circle cx="1.500" cy="11.800" r="1"/></g></svg>
<svg class="i" style="left:1076.5px;top:109px" width="3" height="14" viewBox="0 0 3 14"><g fill="#c9c9c9"><circle cx="1.500" cy="2.200" r="1"/><circle cx="1.500" cy="7" r="1"/><circle cx="1.500" cy="11.800" r="1"/></g></svg>
<svg class="i" style="left:1239.5px;top:109px" width="3" height="14" viewBox="0 0 3 14"><g fill="#c9c9c9"><circle cx="1.500" cy="2.200" r="1"/><circle cx="1.500" cy="7" r="1"/><circle cx="1.500" cy="11.800" r="1"/></g></svg>
<svg class="i" style="left:1348.5px;top:109px" width="3" height="14" viewBox="0 0 3 14"><g fill="#c9c9c9"><circle cx="1.500" cy="2.200" r="1"/><circle cx="1.500" cy="7" r="1"/><circle cx="1.500" cy="11.800" r="1"/></g></svg>
<svg class="i" style="left:1397.5px;top:109px" width="3" height="14" viewBox="0 0 3 14"><g fill="#c9c9c9"><circle cx="1.500" cy="2.200" r="1"/><circle cx="1.500" cy="7" r="1"/><circle cx="1.500" cy="11.800" r="1"/></g></svg>
<svg class="i" style="left:278.5px;top:113.5px" width="12" height="8" viewBox="0 0 12 8"><path d="M1.500 1.500l4.500 4.500 4.500-4.500" stroke="#7c7c7c" stroke-width="1.5" fill="none"/></svg>
<svg class="i" style="left:442.5px;top:113.5px" width="12" height="8" viewBox="0 0 12 8"><path d="M1.500 1.500l4.500 4.500 4.500-4.500" stroke="#7c7c7c" stroke-width="1.5" fill="none"/></svg>
<svg class="i" style="left:1112px;top:115px" width="9" height="6" viewBox="0 0 12 8"><path d="M1.500 1.500l4.500 4.500 4.500-4.500" stroke="#555" stroke-width="2" fill="none"/></svg>
<svg class="i" style="left:1332px;top:112.2px" width="10" height="8" viewBox="0 0 10 8"><path d="M.8 .8l3.200 3.200-3.200 3.200M5.300 .8l3.200 3.200-3.200 3.200" stroke="#111" stroke-width="1.600" fill="none"/></svg>
<svg class="i" style="left:4.5px;top:149px" width="3" height="14" viewBox="0 0 3 14"><g fill="#c9c9c9"><circle cx="1.500" cy="2.200" r="1"/><circle cx="1.500" cy="7" r="1"/><circle cx="1.500" cy="11.800" r="1"/></g></svg>
<svg class="i" style="left:17px;top:144px;" width="24" height="24" viewBox="0 0 24 24"><path d="M.5 .5l23.300 23.300h-23.300z" fill="#cdcbc6" stroke="#a8a8a8" stroke-width="1"/><path d="M6 13.500l6.500 6.500h-6.500z" fill="#d9d9d9" stroke="#bdbdbd" stroke-width=".9"/><rect x="17.500" y="2.500" width="5" height="19" fill="#d5d8cc" stroke="#c3c3c3" stroke-width=".8"/><path d="M20 5h2.500M20 8h2.500M20 11h2.500M20 14h2.500M20 17h2.500" stroke="#bcbcbc" stroke-width=".7"/></svg>
<svg class="i" style="left:54.5px;top:144px;" width="24" height="24" viewBox="0 0 24 24"><path d="M10.5 1.2l2.800 2.800-2.800 2.800-2.800-2.800z" fill="#cdcdcd" stroke="#bababa" stroke-width=".9"/><path d="M19.7 2.9l2.800 2.800-2.800 2.800-2.800-2.800z" fill="#cdcdcd" stroke="#bababa" stroke-width=".9"/><path d="M3.5 9.2l2.800 2.800-2.800 2.800-2.800-2.800z" fill="#cdcdcd" stroke="#bababa" stroke-width=".9"/><g transform="translate(12.5 13.5)"><rect width="10.8" height="10.8" rx="1.500" fill="#bfbfbf"/><path d="M1.800 3.9h4.536v-2.500l4 4-4 4v-2.500h-4.536z" fill="#e2e2e2"/></g></svg>
<svg class="i" style="left:111.5px;top:144px;" width="24" height="24" viewBox="0 0 24 24"><path d="M1.500 7c0-3.600 3-6 7-5.400 3 .5 5 1 8 .4 4-.7 6 1.200 6 4.800s-1.500 6-4.500 6.600c-2 .4-3-1.200-5-1.800-3-1-5.500 1.200-8 1-2.500-.2-3.500-3-3.500-5.600z" fill="#c7c7c7" stroke="#b2b2b2" stroke-width="1"/><g transform="translate(12.8 13.3)"><rect width="10.7" height="10.7" rx="1.500" fill="#bfbfbf"/><path d="M3.05 7.15a2.800 2.800 0 1 1 3 1.200" stroke="#dedede" stroke-width="1.500" fill="none"/><path d="M4.75 5.85l3.200 2.800h-3.800z" fill="#dedede"/></g></svg>
<svg class="i" style="left:147.5px;top:144px;" width="24" height="24" viewBox="0 0 24 24"><circle cx="8.300" cy="8.300" r="7.200" fill="#cdcdcd" stroke="#c0c0c0" stroke-width="1"/><path d="M12 10l7 0 3.800 6.300-3.800 6.500h-7l-3.800-6.500z" fill="#d4d4d4" stroke="#c0c0c0" stroke-width="1"/><path d="M8.300 8.300l7 7.500" stroke="#b4b4b4" stroke-width="1"/><path d="M15.800 16.300l-3.200-.6 2.600-2.600z" fill="#b4b4b4"/></svg>
<svg class="i" style="left:183.5px;top:144px;" width="24" height="24" viewBox="0 0 24 24"><path d="M1.500 7c0-3.600 3-6 7-5.400 3 .5 5 1 8 .4 4-.7 6 1.200 6 4.800s-1.500 6-4.500 6.600c-2 .4-3-1.200-5-1.800-3-1-5.500 1.200-8 1-2.500-.2-3.500-3-3.500-5.600z" fill="#c7c7c7" stroke="#b2b2b2" stroke-width="1"/><ellipse cx="7.500" cy="6.500" rx="4.500" ry="3" transform="rotate(-15 7.500 6.500)" fill="#dadada" stroke="#bdbdbd" stroke-width="1"/><g transform="translate(13.3 13.3)"><rect width="10.7" height="10.7" rx="1.500" fill="#c5c3b8"/><g stroke="#dddcd6" stroke-width="1.200"><path d="M5.35 1.500v7.7M1.800 2.782l7.1 4.118M8.9 2.782l-7.1 4.118"/></g><circle cx="5.35" cy="5.35" r="1.700" fill="#dddcd6"/></g></svg>
<svg class="i" style="left:219.5px;top:144px;" width="24" height="24" viewBox="0 0 24 24"><path d="M1.500 7c0-3.600 3-6 7-5.400 3 .5 5 1 8 .4 4-.7 6 1.200 6 4.800s-1.500 6-4.500 6.600c-2 .4-3-1.200-5-1.800-3-1-5.500 1.200-8 1-2.500-.2-3.500-3-3.500-5.600z" fill="#d3d3d3" stroke="#c2c2c2" stroke-width="1"/><path d="M2 22c-1-3 1-7.500 5.500-9.500 1.500-.6 2 .5 1.800 1.500-.5 3-1 5.500-2.500 7.800-1 1.500-4.300 1.700-4.800.2z" fill="#c7c7c7" stroke="#b2b2b2" stroke-width="1"/><g transform="translate(13.3 13.3)"><rect width="10.7" height="10.7" rx="1.500" fill="#c5c3b8"/><g stroke="#dddcd6" stroke-width="1.200"><path d="M5.35 1.500v7.7M1.800 2.782l7.1 4.118M8.9 2.782l-7.1 4.118"/></g><circle cx="5.35" cy="5.35" r="1.700" fill="#dddcd6"/></g></svg>
<svg class="i" style="left:255.5px;top:144px;" width="24" height="24" viewBox="0 0 24 24"><path d="M1.500 7c0-3.600 3-6 7-5.400 3 .5 5 1 8 .4 4-.7 6 1.200 6 4.800s-1.500 6-4.500 6.600c-2 .4-3-1.200-5-1.800-3-1-5.500 1.200-8 1-2.500-.2-3.500-3-3.500-5.600z" fill="#d3d3d3" stroke="#bfbfbf" stroke-width="1"/><ellipse cx="7.500" cy="6.500" rx="4.500" ry="3" transform="rotate(-15 7.500 6.500)" fill="#c8c8c8" stroke="#bdbdbd" stroke-width="1"/><g transform="translate(13.3 13.3)"><rect width="10.7" height="10.7" rx="1.500" fill="#c5c3b8"/><g stroke="#dddcd6" stroke-width="1.200"><path d="M5.35 1.500v7.7M1.800 2.782l7.1 4.118M8.9 2.782l-7.1 4.118"/></g><circle cx="5.35" cy="5.35" r="1.700" fill="#dddcd6"/></g></svg>
<svg class="i" style="left:291.5px;top:144px;" width="24" height="24" viewBox="0 0 24 24"><path d="M1.500 7c0-3.600 3-6 7-5.400 3 .5 5 1 8 .4 4-.7 6 1.200 6 4.800s-1.500 6-4.500 6.600c-2 .4-3-1.200-5-1.800-3-1-5.500 1.200-8 1-2.500-.2-3.500-3-3.500-5.600z" fill="#cdcdcd" stroke="#bdbdbd" stroke-width="1"/><ellipse cx="7.500" cy="6.500" rx="4.500" ry="3" transform="rotate(-15 7.500 6.500)" fill="#dcdcdc" stroke="#bdbdbd" stroke-width="1"/><g transform="translate(14.5 14)"><rect width="9.5" height="9.5" rx="1.500" fill="#cfcdc8"/><path d="M2.500 2.500l4.5 4.5M7 2.500l-4.5 4.5" stroke="#e4e4e2" stroke-width="2.200"/></g></svg>
<svg class="i" style="left:327.5px;top:144px;" width="24" height="24" viewBox="0 0 24 24"><path d="M1.500 7c0-3.600 3-6 7-5.400 3 .5 5 1 8 .4 4-.7 6 1.200 6 4.800s-1.500 6-4.500 6.600c-2 .4-3-1.200-5-1.800-3-1-5.500 1.200-8 1-2.500-.2-3.500-3-3.500-5.600z" fill="#d3d3d3" stroke="#c2c2c2" stroke-width="1"/><path d="M2 22c-1-3 1-7.500 5.500-9.500 1.500-.6 2 .5 1.800 1.500-.5 3-1 5.500-2.500 7.800-1 1.500-4.300 1.700-4.800.2z" fill="#c7c7c7" stroke="#b2b2b2" stroke-width="1"/><g transform="translate(14.5 14)"><rect width="9.5" height="9.5" rx="1.500" fill="#cfcdc8"/><path d="M2.500 2.500l4.5 4.5M7 2.500l-4.5 4.5" stroke="#e4e4e2" stroke-width="2.200"/></g></svg>
<svg class="i" style="left:363.5px;top:144px;" width="24" height="24" viewBox="0 0 24 24"><path d="M1.500 8c0-4 3-6 7-6 2.500 0 4 1 7 .5 4-.7 7 .5 7 4 0 3.500-3 4-6.500 4.500-3 .5-4.500 2-5.500 6-.6 2.500-1 4.500-2.500 4.500s-1.800-2.500-2.500-5.500c-.8-3.500-4-4-4-8z" fill="#cbcbc8" stroke="#bfbfbd" stroke-width="1"/></svg>
<svg class="i" style="left:399.5px;top:144px;" width="24" height="24" viewBox="0 0 24 24"><path d="M2 17c-.5-5 3-6.500 6-9 2.500-2 4-5.500 8.500-6 3.500-.4 6 2.500 5.500 6-.5 3.500-3.500 4-6 6.500-2.500 2.500-3 6.500-7 7.500-3.500.8-6.700-1.500-7-5z" fill="#cfcdc6" stroke="#bfbdb8" stroke-width="1"/><path d="M4.500 16.500c-.3-3.500 2.500-4.500 5-6.500 2.500-2 3.500-5 7-5.500 2.300-.3 3.800 1.500 3.500 3.800-.4 2.700-2.500 3-4.800 5.200-2.400 2.300-3 5.500-5.800 6.300-2.400.6-4.700-1-4.900-3.300z" fill="#c9c9c9" stroke="#bcbcbc" stroke-width=".8"/></svg>
<svg class="i" style="left:435.5px;top:144px;" width="24" height="24" viewBox="0 0 24 24"><path d="M2.500 2.500l6 12 6-11h5.500" fill="none" stroke="#c2c2c2" stroke-width="1"/><g fill="#dcdcdc" stroke="#bfbfbf" stroke-width=".9"><rect x="1" y="1" width="3" height="3"/><rect x="7" y="13" width="3" height="3"/><rect x="13" y="2" width="3" height="3"/><rect x="19" y="2" width="3" height="3"/></g><rect x="13" y="12.800" width="10.700" height="10.700" rx="2" fill="#bdbdbd"/><path d="M15.500 17a3 3 0 0 1 5.500-1M21.300 19.300a3 3 0 0 1-5.500 1" stroke="#e6e6e6" stroke-width="1.500" fill="none"/></svg>
<svg class="i" style="left:471.5px;top:144px;" width="24" height="24" viewBox="0 0 24 24"><path d="M9.500 0v16M0 11.500h22M15.500 9v14" stroke="#c2c2c2" stroke-width="1.100"/><g fill="#dcdcdc" stroke="#bdbdbd" stroke-width=".9"><circle cx="9.500" cy="11.500" r="1.800"/><rect x="13.800" y="9.800" width="3.400" height="3.400"/><circle cx="9.500" cy="19.500" r="1.300"/></g><rect x="15.500" y="1.500" width="7" height="7" rx="1" fill="#cfcdc8"/><circle cx="19" cy="5" r="1.700" fill="#e6e6e2"/><rect x=".5" y="15.500" width="7" height="7" rx="1" fill="#d4d2cc"/><path d="M2.200 17.200l3.600 3.600M5.800 17.200l-3.600 3.600" stroke="#ecece8" stroke-width="1.500"/></svg>
<svg class="i" style="left:507.5px;top:144px;" width="24" height="24" viewBox="0 0 24 24"><path d="M10.500 2c-5-1.500-9 .5-9 5s3 7 6.500 5.500zM14 2.500c4-2 9-.5 8.500 4-.4 3.500-3 6-6.500 5z" fill="#cdcdcd" stroke="#bfbfbf" stroke-width="1"/><g fill="none" stroke="#c0beb8" stroke-width="1.100"><path d="M14.5 1.500l-4.500 15M10.5 1.500l4.500 15"/><ellipse cx="9" cy="19.500" rx="2" ry="3.200" transform="rotate(25 9 19.500)"/><ellipse cx="16" cy="19.500" rx="2" ry="3.200" transform="rotate(-25 16 19.500)"/></g></svg>
<svg class="i" style="left:543.5px;top:144px;" width="24" height="24" viewBox="0 0 24 24"><path d="M10.500 2c-5-1.500-9 .5-9 5s3 7 6.500 5.500zM14 2.500c4-2 9-.5 8.500 4-.4 3.500-3 6-6.500 5z" fill="#cdcdcd" stroke="#bfbfbf" stroke-width="1"/><g fill="none" stroke="#c0beb8" stroke-width="1.100"><path d="M14.5 1.500l-4.500 15M10.5 1.500l4.500 15"/><ellipse cx="9" cy="19.500" rx="2" ry="3.200" transform="rotate(25 9 19.500)"/><ellipse cx="16" cy="19.500" rx="2" ry="3.200" transform="rotate(-25 16 19.500)"/></g></svg>
<svg class="i" style="left:579.5px;top:144px;" width="24" height="24" viewBox="0 0 24 24"><path d="M11 3c-4-2.500-9.500-1-9.500 3.500 0 4 4 6.500 8 5 1.500-.5 2-1.500 2.500-3M13 3c4-2.500 9.500-1 9.500 3.500 0 4-4 6.500-8 5" fill="#cbcbcb" stroke="#bdbdbd" stroke-width="1"/><path d="M9.500 4.500h6M9.500 6.800h6M9.500 9h6" stroke="#b8b8b8" stroke-width=".9"/><path d="M6.500 12c1 4 4 7 8 9.500" stroke="#b8b8b8" stroke-width="1" fill="none"/></svg>
<svg class="i" style="left:615.5px;top:144px;" width="24" height="24" viewBox="0 0 24 24"><g fill="#e0e0e0" stroke="#cbcbcb" stroke-width=".8"><rect x="2" y="2.500" width="20" height="5"/><rect x="2" y="9.500" width="20" height="5"/><rect x="2" y="16.500" width="20" height="5"/></g><path d="M12 2.500v19" stroke="#cbcbcb" stroke-width=".8"/><path d="M9 5c2-2 4-2 6 0M9 12c2-2 4-2 6 0M9 19c2-2 4-2 6 0" stroke="#aaa" stroke-width=".8" fill="none"/></svg>
<svg class="i" style="left:651.5px;top:144px;" width="24" height="24" viewBox="0 0 24 24"><path d="M12.500 2l8 5-8 4.500z" fill="#cfcfcf" stroke="#bcbcbc" stroke-width="1"/><path d="M12.500 13.500l5.500 9h-11z" fill="#dedede" stroke="#cdcdcd" stroke-width="1"/><path d="M7 19c-5-4.500-3.500-12 2.500-15" stroke="#b4b4b4" stroke-width="1" fill="none"/><path d="M10.500 2.500l-1 3-2.500-2z" fill="#b4b4b4"/></svg>
<svg class="i" style="left:88.5px;top:152px" width="12" height="8" viewBox="0 0 12 8"><path d="M1.500 1.500l4.500 4.500 4.500-4.500" stroke="#7c7c7c" stroke-width="1.5" fill="none"/></svg>
<svg class="i" style="left:686.5px;top:152px" width="12" height="8" viewBox="0 0 12 8"><path d="M1.500 1.500l4.500 4.500 4.500-4.500" stroke="#7c7c7c" stroke-width="1.5" fill="none"/></svg>
<svg class="i" style="left:4.5px;top:189.5px" width="3" height="14" viewBox="0 0 3 14"><g fill="#c9c9c9"><circle cx="1.500" cy="2.200" r="1"/><circle cx="1.500" cy="7" r="1"/><circle cx="1.500" cy="11.800" r="1"/></g></svg>
<svg class="i" style="left:18px;top:184.5px;" width="24" height="24" viewBox="0 0 24 24"><path d="M1.500 7c0-3.600 3-6 7-5.400 3 .5 5 1 8 .4 4-.7 6 1.200 6 4.800s-1.500 6-4.500 6.600c-2 .4-3-1.200-5-1.800-3-1-5.500 1.200-8 1-2.500-.2-3.500-3-3.500-5.600z" fill="#c7c7c7" stroke="#b2b2b2" stroke-width="1"/><path d="M2 22c-1-3 1-7.500 5.500-9.500 1.500-.6 2 .5 1.800 1.500-.5 3-1 5.500-2.500 7.800-1 1.500-4.300 1.700-4.800.2z" fill="#c7c7c7" stroke="#b2b2b2" stroke-width="1"/><path d="M9 19c2-4 5-7 10-10" stroke="#bdbdbd" stroke-width="1" fill="none"/><path d="M13 12c2-2.500 5.500-3.500 7-2 1 1-1 3-4 3.200-1 .1-2-.3-3-1.200zM13.500 16c3-1 6-.5 6.500 1 .4 1.300-2.500 2.200-5 .8-.8-.4-1.200-1-1.500-1.800z" fill="#d6d4ce" stroke="#c2bdb4" stroke-width=".9"/></svg>
<svg class="i" style="left:75.5px;top:184.5px;" width="24" height="24" viewBox="0 0 24 24"><path d="M1.500 7c0-3.600 3-6 7-5.400 3 .5 5 1 8 .4 4-.7 6 1.200 6 4.800s-1.500 6-4.500 6.600c-2 .4-3-1.200-5-1.800-3-1-5.500 1.200-8 1-2.500-.2-3.500-3-3.500-5.600z" fill="#dadada" stroke="#bfbfbf" stroke-width="1"/><path d="M2 22c-1-3 1-7.500 5.500-9.500 1.500-.6 2 .5 1.800 1.500-.5 3-1 5.500-2.500 7.800-1 1.500-4.300 1.700-4.800.2z" fill="#c7c7c7" stroke="#b2b2b2" stroke-width="1"/><path d="M9 19c2-4 5-7 10-10" stroke="#bdbdbd" stroke-width="1" fill="none"/><g transform="translate(13.5 13.5)"><rect width="10.3" height="10.3" rx="1.500" fill="#c5c3b8"/><g stroke="#dddcd6" stroke-width="1.200"><path d="M5.15 1.500v7.3M1.800 2.678l6.7 3.886M8.5 2.678l-6.7 3.886"/></g><circle cx="5.15" cy="5.15" r="1.700" fill="#dddcd6"/></g></svg>
<svg class="i" style="left:111.5px;top:184.5px;" width="24" height="24" viewBox="0 0 24 24"><path d="M10.500 2c-5-1.500-9 .5-9 5s3 7 6.500 5.500zM14 2.500c4-2 9-.5 8.500 4-.4 3.500-3 6-6.500 5z" fill="#cdcdcd" stroke="#bfbfbf" stroke-width="1"/><g fill="none" stroke="#c0beb8" stroke-width="1.100"><path d="M14.5 1.500l-4.500 15M10.5 1.500l4.500 15"/><ellipse cx="9" cy="19.500" rx="2" ry="3.200" transform="rotate(25 9 19.500)"/><ellipse cx="16" cy="19.500" rx="2" ry="3.200" transform="rotate(-25 16 19.500)"/></g></svg>
<svg class="i" style="left:147.5px;top:184.5px;" width="24" height="24" viewBox="0 0 24 24"><path d="M11 2.500c-4-2-9.500-1-9.500 4 0 5 4 8 8 6.500 1.500-.5 2-1.500 2.500-3M13 2.500c4-2 9.500-1 9.500 4 0 5-4 8-8 6.500" fill="#cbcbcb" stroke="#bdbdbd" stroke-width="1"/><path d="M9 4h7M9 6.500h7M9 9h7M12.500 2v9" stroke="#bcbcbc" stroke-width="1"/><path d="M12.500 11c-3 3 2 4-1 6.500 1.500 1 2.500 2.500 4 4" stroke="#bababa" stroke-width="1" fill="none"/></svg>
<svg class="i" style="left:183.5px;top:184.5px;" width="24" height="24" viewBox="0 0 24 24"><rect x="1" y="1" width="15" height="13" fill="none" stroke="#c8c2b0" stroke-width="1" stroke-dasharray="2 1.500"/><path d="M1.500 7c0-3.600 3-6 7-5.400 3 .5 5 1 8 .4 4-.7 6 1.200 6 4.800s-1.500 6-4.500 6.600c-2 .4-3-1.200-5-1.800-3-1-5.500 1.200-8 1-2.500-.2-3.500-3-3.500-5.600z" fill="#dcdcdc" stroke="#c0c0c0" stroke-width="1"/><path d="M2 22c-1-3 1-7.500 5.500-9.500 1.500-.6 2 .5 1.800 1.500-.5 3-1 5.500-2.500 7.800-1 1.500-4.300 1.700-4.800.2z" fill="#d8d8d8" stroke="#c0c0c0" stroke-width="1"/><rect x="13.500" y="13.500" width="10.500" height="10.500" rx="1.500" fill="#c4c4c4"/><rect x="15" y="15" width="7.500" height="7.500" fill="#d9dce2"/><path d="M16.500 20.500a2.800 2.800 0 0 0 4.500 0" stroke="#f0f0f0" stroke-width="1.300" fill="none"/></svg>
<svg class="i" style="left:220.5px;top:184.5px;" width="24" height="24" viewBox="0 0 24 24"><path d="M1.500 7c0-3.600 3-6 7-5.400 3 .5 5 1 8 .4 4-.7 6 1.200 6 4.800s-1.500 6-4.500 6.600c-2 .4-3-1.200-5-1.800-3-1-5.500 1.200-8 1-2.500-.2-3.500-3-3.500-5.600z" fill="#cfcfcf" stroke="#bfbfbf" stroke-width="1"/><ellipse cx="7.500" cy="6" rx="4" ry="3" fill="#d8d8d8" stroke="#c4c4c4" stroke-width=".9" stroke-dasharray="1.500 1"/></svg>
<svg class="i" style="left:278.5px;top:184.5px;" width="24" height="24" viewBox="0 0 24 24"><path d="M1.500 6c0-3 3-5 7-4.500 3 .4 5 .8 8 .3 4-.6 6 1 6 4s-1.500 5-4.500 5.500c-2 .3-3-1-5-1.500-3-.8-5.500 1-8 .8-2.500-.2-3.500-2.500-3.500-4.600z" fill="#dedede" stroke="#b8b8b8" stroke-width="1" stroke-dasharray="2 1.300"/><path d="M3 6.500c0-2.500 2.500-4 5-3.500 2 .5 3.500 2 3.500 4.200-2.500.3-5 .8-7 .8-1 0-1.500-.7-1.500-1.500z" fill="#c6c6c6" stroke="#b8b8b8" stroke-width=".8"/></svg>
<svg class="i" style="left:336.5px;top:184.5px;" width="24" height="24" viewBox="0 0 24 24"><path d="M1.500 7c0-3.600 3-6 7-5.400 3 .5 5 1 8 .4 4-.7 6 1.200 6 4.800s-1.500 6-4.500 6.600c-2 .4-3-1.200-5-1.800-3-1-5.500 1.200-8 1-2.500-.2-3.500-3-3.500-5.600z" fill="#e0e0e0" stroke="#bdbdbd" stroke-width="1"/><path d="M3 6.500c0-2.500 2.500-4 5-3.500 2 .5 3.500 2 3.500 4.200-2.500.3-5 .8-7 .8-1 0-1.500-.7-1.500-1.500z" fill="#c6c6c6" stroke="#b8b8b8" stroke-width=".8"/><g transform="translate(13.2 13.5)"><rect width="10.5" height="10.5" rx="1.500" fill="#c5c3b8"/><g stroke="#dddcd6" stroke-width="1.200"><path d="M5.25 1.500v7.5M1.800 2.73l6.9 4.002M8.7 2.73l-6.9 4.002"/></g><circle cx="5.25" cy="5.25" r="1.700" fill="#dddcd6"/></g></svg>
<svg class="i" style="left:394px;top:184.5px;" width="24" height="24" viewBox="0 0 24 24"><path d="M2 7c-1-3.500 3-6 7-5.500 3 .4 4.500 2.500 3.500 5.500-1 3.500-4 5.500-7 5-2-.3-3-2.500-3.500-5z" fill="#dcdcdc" stroke="#bdbdbd" stroke-width="1"/><path d="M10.500 6c1.500-2.500 6-4 9.500-2.500 2.500 1 3 4 2.500 7.500-4-2-8-.5-11.500 0-1-1.500-1.500-3-.5-5z" fill="#dcdcdc" stroke="#bdbdbd" stroke-width="1"/><path d="M10.500 6c.8-1.300 1.800-2.300 3-2.800.3 2.800-1 5.800-3.600 7.400-.4-1.500-.3-3 .6-4.600z" fill="#c4c4c4" stroke="#b8b8b8" stroke-width=".8"/><g transform="translate(13.5 13.5)"><rect width="10.5" height="10.5" rx="1.500" fill="#c5c3b8"/><g stroke="#dddcd6" stroke-width="1.200"><path d="M5.25 1.500v7.5M1.800 2.73l6.9 4.002M8.7 2.73l-6.9 4.002"/></g><circle cx="5.25" cy="5.25" r="1.700" fill="#dddcd6"/></g></svg>
<svg class="i" style="left:451px;top:184.5px;" width="24" height="24" viewBox="0 0 24 24"><path d="M2 7c-1-3.500 3-6 7-5.500 3 .4 4.500 2.500 3.500 5.500-1 3.500-4 5.500-7 5-2-.3-3-2.500-3.500-5z" fill="#cfd6dc" stroke="#bdbdbd" stroke-width="1"/><path d="M10.500 6c1.500-2.500 6-4 9.500-2.500 2.500 1 3 4 2.500 7.500-4-2-8-.5-11.500 0-1-1.500-1.500-3-.5-5z" fill="#d8d6d0" stroke="#bdbdbd" stroke-width="1"/><path d="M10.500 6c.8-1.300 1.800-2.300 3-2.800.3 2.800-1 5.800-3.600 7.400-.4-1.500-.3-3 .6-4.600z" fill="#c4c4c4" stroke="#b8b8b8" stroke-width=".8"/><g transform="translate(13.8 13.5)"><rect width="10.5" height="10.5" rx="1.500" fill="#c5c3b8"/><g stroke="#dddcd6" stroke-width="1.200"><path d="M5.25 1.500v7.5M1.800 2.73l6.9 4.002M8.7 2.73l-6.9 4.002"/></g><circle cx="5.25" cy="5.25" r="1.700" fill="#dddcd6"/></g></svg>
<svg class="i" style="left:488px;top:184.5px;" width="24" height="24" viewBox="0 0 24 24"><path d="M3 5l5.500 16M8.500 21l5.500-16 7-3" stroke="#c6c6c6" stroke-width="1" fill="none"/><g fill="#dedede" stroke="#c4c4c4" stroke-width=".8"><circle cx="2.800" cy="4.800" r="1.600"/><circle cx="8.500" cy="21" r="1.400"/><circle cx="16" cy="4" r="1.400"/><circle cx="21.500" cy="2.500" r="1.400"/></g><path d="M2.500 6.500l4.500 9.500 1.500-3 3-.5z" fill="#cbcbcb"/><path d="M11.500 11l3-7 .5 3 3 .5z" fill="#cbcbcb"/><rect x="13" y="12.500" width="11" height="11" rx="1.500" fill="#c4c4c4"/><path d="M15.500 19a3.200 3.200 0 1 0 1-3" stroke="#e8e8e8" stroke-width="1.500" fill="none"/><path d="M15 15l3 .3-2 2.500z" fill="#e8e8e8"/></svg>
<svg class="i" style="left:545.5px;top:184.5px;" width="24" height="24" viewBox="0 0 24 24"><path d="M1.500 4c3-2.500 6-2.500 10-1 3.500 1.300 6 .500 9.500-1 1.500 3 1.500 7-1 11-3-1-5.500-.5-8 1.500-3 2.300-5.500 2-8.500.5-2.500-3-3-7-2-11z" fill="#dadada" stroke="#c0c0c0" stroke-width="1"/><path d="M6 14.500l7-4 6.500 3.500" fill="#d0d0d0" stroke="#c0c0c0" stroke-width=".8"/><text x="18.5" y="23" font-family="Liberation Serif" font-size="11" fill="#a8a8a8">∫</text></svg>
<svg class="i" style="left:581.5px;top:184.5px;" width="24" height="24" viewBox="0 0 24 24"><path d="M1.500 4c3-2.500 6-2.500 10-1 3.500 1.300 6 .500 9.500-1 1.500 3 1.500 7-1 11-3-1-5.500-.5-8 1.500-3 2.300-5.500 2-8.500.5-2.500-3-3-7-2-11z" fill="#dadada" stroke="#c0c0c0" stroke-width="1"/><path d="M4.500 15l7.500-4 .8 2.500-7 4z" fill="#e4e4e4" stroke="#c4c4c4" stroke-width=".8"/><text x="17.5" y="23.5" font-family="Liberation Serif" font-size="13" fill="#a8a8a8">d</text></svg>
<svg class="i" style="left:617.5px;top:184.5px;" width="24" height="24" viewBox="0 0 24 24"><path d="M1.500 4c3-2.500 6-2.500 10-1 3.500 1.300 6 .500 9.500-1 1.500 3 1.500 7-1 11-3-1-5.500-.5-8 1.500-3 2.300-5.500 2-8.500.5-2.500-3-3-7-2-11z" fill="#dadada" stroke="#c0c0c0" stroke-width="1"/><path d="M4.500 15l7.500-4 .8 2.500-7 4z" fill="#e4e4e4" stroke="#c4c4c4" stroke-width=".8"/><text x="18.5" y="23" font-family="Liberation Serif" font-size="11" fill="#a8a8a8">∫</text></svg>
<svg class="i" style="left:653.5px;top:184.5px;" width="24" height="24" viewBox="0 0 24 24"><g transform="rotate(38 12 12)"><rect x="3" y="5" width="18" height="6" fill="#cbcbc8" stroke="#c0c0bd" stroke-width=".8"/><rect x="3" y="13" width="18" height="6" fill="#cbcbc8" stroke="#c0c0bd" stroke-width=".8"/><path d="M1 12h22" stroke="#b4b4b4" stroke-width=".9" stroke-dasharray="1.500 1.200"/><path d="M8 5v14M12 5v14M16 5v14" stroke="#d6d6d4" stroke-width=".7"/></g></svg>
<svg class="i" style="left:702px;top:184.5px;" width="24" height="24" viewBox="0 0 24 24"><rect x="1.500" y="1.500" width="21" height="21.500" rx="1" fill="#fff" stroke="#8a8a8a" stroke-width="1"/><rect x="2" y="2" width="20" height="4" fill="#6a9a2a"/><path d="M2 2h6l-4 4h-2z" fill="#f0a020"/><path d="M2 2h3l-3 3z" fill="#e04a1c"/><path d="M2 6h20" stroke="#8ab04a" stroke-width="1" stroke-dasharray="1 1"/><g fill="#fff" stroke="#3c6aa8" stroke-width="1.100"><rect x="4.500" y="11.500" width="5.500" height="4"/><rect x="12.500" y="8.500" width="6" height="4"/><rect x="10" y="17.500" width="5" height="3.500"/></g><path d="M7 15.500v4h3M10 13.500h2.500" stroke="#3c6aa8" stroke-width="1" fill="none"/><g transform="translate(14.5 14.5)"><rect width="9.5" height="9.5" rx="1.500" fill="#c4a000"/><g stroke="#fff" stroke-width="1.400" stroke-linecap="round"><path d="M4.75 1.600v6.3 M1.900 2.6125l5.7 3.306 M7.6 2.6125l-5.7 3.306"/></g></g></svg>
<svg class="i" style="left:738px;top:184.5px;" width="24" height="24" viewBox="0 0 24 24"><path d="M.5 .5h7l4 4v9.500h-11z" fill="#fff" stroke="#6a6a6a" stroke-width="1"/><g transform="translate(7.5 6.5)"><path d="M0 3v11.500c0 1.800 3.700 3 8.300 3s8.200-1.200 8.200-3v-11.500z" fill="#6a97cb" stroke="#3f6aa5" stroke-width=".8"/><path d="M0 7c0 1.800 3.700 3 8.300 3s8.200-1.200 8.200-3M0 11c0 1.800 3.700 3 8.300 3s8.200-1.200 8.200-3" fill="none" stroke="#3f6aa5" stroke-width=".8"/><ellipse cx="8.250" cy="3" rx="8.250" ry="3" fill="#9cbde4" stroke="#3f6aa5" stroke-width=".8"/></g><path d="M3 15.5h7v-3l7 5.500-7 5.500v-3h-7z" fill="#34506e" stroke="#e8eef4" stroke-width=".8"/></svg>
<svg class="i" style="left:774px;top:184.5px;" width="24" height="24" viewBox="0 0 24 24"><g transform="translate(.5 1)"><path d="M0 2.500v8c0 1.600 2.900 2.500 6.500 2.500s6.500-.9 6.500-2.500v-8z" fill="#6a97cb" stroke="#3f6aa5" stroke-width=".8"/><path d="M0 5.500c0 1.600 2.900 2.500 6.500 2.500s6.500-.9 6.500-2.500M0 8.300c0 1.600 2.900 2.500 6.500 2.500s6.500-.9 6.500-2.500" fill="none" stroke="#3f6aa5" stroke-width=".8"/><ellipse cx="6.500" cy="2.500" rx="6.500" ry="2.300" fill="#9cbde4" stroke="#3f6aa5" stroke-width=".8"/></g><path d="M9.500 6.500h9.500l4.500 4.500v12.500h-14z" fill="#fff" stroke="#3a3a3a" stroke-width="1.100"/><path d="M6 15h7v-3l7 5.500-7 5.500v-3h-7z" fill="#34506e" stroke="#e8eef4" stroke-width=".8"/></svg>
<svg class="i" style="left:836px;top:184.5px;" width="24" height="24" viewBox="0 0 24 24"><path d="M12 6.500h3.500v6" stroke="#8aa4c4" stroke-width="1.100" fill="none"/><g transform="translate(0.5 1)"><rect x=".5" y=".5" width="10.5" height="11" rx=".8" fill="#d8d8d8" stroke="#8e8e8e" stroke-width="1"/><rect x="1" y="1" width="9.5" height="2.200" fill="#b4b4b4"/><rect x="1.800" y="4.300" width="3.55" height="2" fill="#f4e03c"/><rect x="6.15" y="4.300" width="3.55" height="2" fill="#f4e03c"/><rect x="1.800" y="7.300" width="3.55" height="2" fill="#eee"/><rect x="6.15" y="7.300" width="3.55" height="2" fill="#eee"/></g><g transform="translate(12.5 11.5)"><rect x=".5" y=".5" width="10" height="11" rx=".8" fill="#d8d8d8" stroke="#8e8e8e" stroke-width="1"/><rect x="1" y="1" width="9" height="2.200" fill="#b4b4b4"/><rect x="1.800" y="4.300" width="3.3" height="2" fill="#eee"/><rect x="5.9" y="4.300" width="3.3" height="2" fill="#eee"/><rect x="1.800" y="7.500" width="3.3" height="2" fill="#eee"/><rect x="5.9" y="7.500" width="3.3" height="2" fill="#f4e03c"/></g></svg>
<svg class="i" style="left:1082px;top:184.5px;" width="24" height="24" viewBox="0 0 24 24"><path d="M11 5.500h2.500v4" stroke="#c8c8c8" stroke-width="1" fill="none"/><rect x=".5" y="1" width="11" height="11.500" rx="1" fill="#d4d4d4" stroke="#cacaca" stroke-width="1"/><path d="M2 4h8M2 6.500h8M2 9h8M5.500 2v9" stroke="#dedede" stroke-width=".8"/><path d="M2.500 6.500h2M6.500 6.500h3" stroke="#dccfb8" stroke-width=".8"/><path d="M15.500 14.500l8 8.500" stroke="#a9a9a9" stroke-width="4" stroke-linecap="butt"/><path d="M11.500 13.500a3.800 3.800 0 1 0 4.500-3.500l.5 2.500-2 1.500z" fill="#e2e2e2" stroke="#cdcdcd" stroke-width="1"/></svg>
<svg class="i" style="left:52.5px;top:192px" width="12" height="8" viewBox="0 0 12 8"><path d="M1.500 1.500l4.500 4.500 4.500-4.500" stroke="#7c7c7c" stroke-width="1.5" fill="none"/></svg>
<svg class="i" style="left:254.5px;top:192px" width="12" height="8" viewBox="0 0 12 8"><path d="M1.500 1.500l4.500 4.500 4.500-4.500" stroke="#7c7c7c" stroke-width="1.5" fill="none"/></svg>
<svg class="i" style="left:312.5px;top:192px" width="12" height="8" viewBox="0 0 12 8"><path d="M1.500 1.500l4.500 4.500 4.500-4.500" stroke="#7c7c7c" stroke-width="1.5" fill="none"/></svg>
<svg class="i" style="left:370.5px;top:192px" width="12" height="8" viewBox="0 0 12 8"><path d="M1.500 1.500l4.500 4.500 4.500-4.500" stroke="#7c7c7c" stroke-width="1.5" fill="none"/></svg>
<svg class="i" style="left:428.5px;top:192px" width="12" height="8" viewBox="0 0 12 8"><path d="M1.500 1.500l4.500 4.500 4.500-4.500" stroke="#7c7c7c" stroke-width="1.5" fill="none"/></svg>
<svg class="i" style="left:522.5px;top:192px" width="12" height="8" viewBox="0 0 12 8"><path d="M1.500 1.500l4.500 4.500 4.500-4.500" stroke="#7c7c7c" stroke-width="1.5" fill="none"/></svg>
<svg class="i" style="left:689.5px;top:189.5px" width="3" height="14" viewBox="0 0 3 14"><g fill="#c9c9c9"><circle cx="1.500" cy="2.200" r="1"/><circle cx="1.500" cy="7" r="1"/><circle cx="1.500" cy="11.800" r="1"/></g></svg>
<svg class="i" style="left:810.5px;top:189.5px" width="3" height="14" viewBox="0 0 3 14"><g fill="#c9c9c9"><circle cx="1.500" cy="2.200" r="1"/><circle cx="1.500" cy="7" r="1"/><circle cx="1.500" cy="11.800" r="1"/></g></svg>
<svg class="i" style="left:823.5px;top:189.5px" width="3" height="14" viewBox="0 0 3 14"><g fill="#c9c9c9"><circle cx="1.500" cy="2.200" r="1"/><circle cx="1.500" cy="7" r="1"/><circle cx="1.500" cy="11.800" r="1"/></g></svg>
<div class="b" style="left:868px;top:182px;width:206px;height:28px;background:#fcfcfc;border-radius:3px;"></div>
<div class="b" style="left:1056px;top:186px;width:1px;height:20px;background:#d2d2d2;"></div>
<div class="t " style="left:872.5px;top:186.5px;height:20px;line-height:20px;font-size:14.67px;color:#a9a9a9;letter-spacing:0.173px;">Select relationship…</div>
<svg class="i" style="left:1058.4px;top:192.6px" width="10.2" height="6.8" viewBox="0 0 12 8"><path d="M1.500 1.500l4.500 4.500 4.500-4.500" stroke="#888" stroke-width="1.76471" fill="none"/></svg>
</div></body></html>
